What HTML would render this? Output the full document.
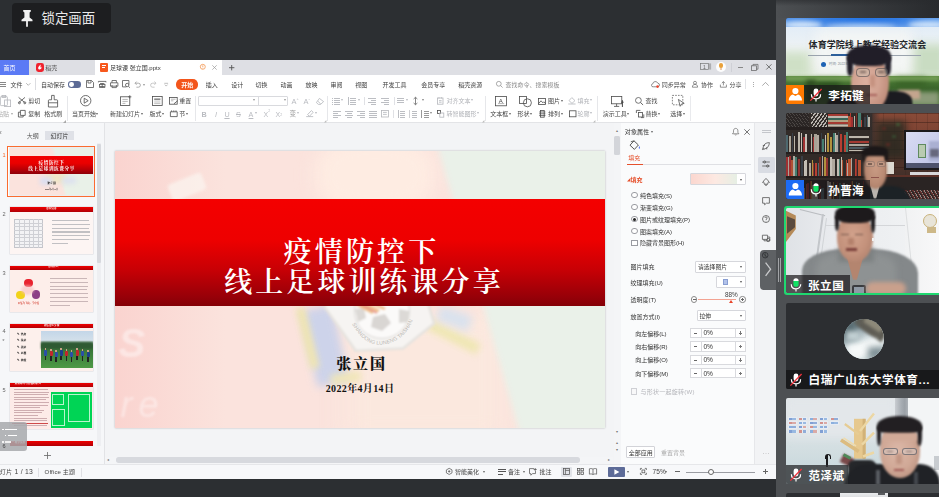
<!DOCTYPE html>
<html lang="zh-CN">
<head>
<meta charset="utf-8">
<title>会议</title>
<style>
*{box-sizing:border-box;margin:0;padding:0}
html,body{width:939px;height:497px;overflow:hidden;background:#2c2f32}
body{position:relative;font-family:"Liberation Sans","Noto Sans CJK SC",sans-serif;color:#444;font-size:6px;line-height:1}
.a{position:absolute}
.t{position:absolute;white-space:nowrap;line-height:1}
svg{position:absolute;overflow:visible}
#lock{left:12px;top:3px;width:99px;height:30px;background:#1d1e20;border-radius:4px}
#lock .t{left:29.6px;top:9.2px;font-size:13.4px;color:#e9e9e9}
#win{left:0;top:59.6px;width:776px;height:419.1px;background:#f3f4f6;overflow:hidden}
#tabbar{left:0;top:0;width:776px;height:15.2px;background:#dedfe4}
#tabbar,#menurow,#ribbon,#leftp,#props,#strip,#status{filter:blur(.3px)}
#menurow{left:0;top:15.2px;width:776px;height:18.2px;background:#fff}
#ribbon{left:0;top:33.4px;width:776px;height:30.4px;background:#fff;border-bottom:1px solid #e3e4e7}
#leftp{left:0;top:63.8px;width:104.5px;height:340.2px;background:#f6f7f9;border-right:1px solid #e2e3e6;overflow:hidden}
#edit{left:105px;top:63.8px;width:516px;height:340.2px;background:#f3f4f6}
#props{left:621px;top:63.8px;width:133px;height:340.2px;background:#fafbfc}
#strip{left:754px;top:63.8px;width:22px;height:340.2px;background:#f2f3f5;border-left:1px solid #e6e7ea}
#status{left:0;top:404px;width:776px;height:15.1px;background:#f7f8fa;border-top:1px solid #e6e7ea}
#slide{left:9.5px;top:27.9px;width:490.6px;height:276.6px;background:#fbe3dd;overflow:hidden;box-shadow:0 0 2px rgba(0,0,0,.25)}
#slide .bg1{left:300px;top:-20px;width:300px;height:340px;background:#e9f1e8;transform:skewX(15deg);transform-origin:0 0;filter:blur(3px)}
#slide .band{left:0;top:47.9px;width:491px;height:106.6px;background:linear-gradient(#f40000 0%,#ee0000 38%,#c80005 66%,#960008 92%,#840006 100%)}
.ttl{position:absolute;left:0;width:491px;text-align:center;color:#fff;font-family:"Liberation Serif","Noto Serif CJK SC",serif;font-weight:600;white-space:nowrap;line-height:1}
#rp{left:776px;top:0;width:163px;height:497px;background:#4d5053}
.tile{position:absolute;left:10px;width:153px;height:86.6px;overflow:hidden;border-radius:2px 0 0 2px;background:#2d2f32}
.nm{position:absolute;bottom:0;height:19px;background:rgba(25,25,28,.72);color:#fff;font-weight:bold;font-size:11.3px;line-height:19px;white-space:nowrap;letter-spacing:.3px}
.ic{stroke:#555;fill:none;stroke-width:.8}
</style>
</head>
<body>
<div id="lock" class="a">
  <svg width="12" height="17" viewBox="0 0 12 17" style="left:9.2px;top:6.5px"><path d="M2.2 0h7.6v1.6L8.6 2.4v5l2.9 2.4v1.5H6.9v5.2L6 17l-.9-.5v-5.2H.5V9.8l2.9-2.4v-5L2.2 1.6z" fill="#f2f2f2"/></svg>
  <span class="t">锁定画面</span>
</div>
<div id="win" class="a">
<div id="tabbar" class="a">
<div class="a" style="left:0px;top:0px;width:28.8px;height:15.2px;background:#5b7af5;"></div>
<span class="t" style="left:3.6px;top:5.12px;font-size:6px;color:#fff;">首页</span>
<div class="a" style="left:35.5px;top:3.6px;width:8.4px;height:8.4px;background:#f0222d;border-radius:2.4px"></div>
<svg width="6" height="6" viewBox="0 0 6 6" style="left:36.8px;top:4.6px;"><path d="M3.6 .6C2.2 2 1 3 1.2 4.4c.2 1 1.6 1.3 2.6.6 1-.8.8-2 .2-2.6-.2.8-.8 1-1 1 .6-.8.8-1.800.6-2.800z" fill="#fff"/></svg>
<span class="t" style="left:45.2px;top:5.12px;font-size:6px;color:#555;">稻壳</span>
<div class="a" style="left:94.5px;top:0px;width:127.5px;height:15.2px;background:#fff;"></div>
<div class="a" style="left:99.8px;top:3.2px;width:8px;height:8.8px;background:#f7581d;border-radius:1px"></div>
<div class="a" style="left:101.6px;top:5.3px;width:4.6px;height:1px;background:#fff;"></div>
<div class="a" style="left:101.6px;top:7.5px;width:3.6px;height:1px;background:#fff;"></div>
<span class="t" style="left:110px;top:5.12px;font-size:6px;color:#333;">足球课 张立国.pptx</span>
<svg width="5.6" height="5.6" viewBox="0 0 5.6 5.6" style="left:200.3px;top:4.7px;"><circle cx="2.800" cy="2.800" r="2.500" fill="none" stroke="#f08a3c" stroke-width=".7"/><path d="M2.800 1.300v1.900M2.800 3.900v.6" stroke="#f08a3c" stroke-width=".7"/></svg>
<svg width="5" height="5" viewBox="0 0 5 5" style="left:211.8px;top:5px;"><path d="M.3.300l4.400 4.400M4.700.300L.3 4.700" stroke="#999" stroke-width=".7"/></svg>
<svg width="5.4" height="5.4" viewBox="0 0 5.4 5.4" style="left:228.6px;top:5px;"><path d="M2.700 0v5.400M0 2.700h5.400" stroke="#555" stroke-width=".9"/></svg>
<svg width="11" height="7" viewBox="0 0 11 7" style="left:700px;top:3.6px;"><rect x=".4" y=".4" width="8" height="6" fill="none" stroke="#777" stroke-width=".7"/><path d="M9.600.400v6.200M10.600.400v6.200" stroke="#888" stroke-width=".6"/></svg>
<span class="t" style="left:703px;top:5.05px;font-size:5px;color:#666;">1</span>
<div class="a" style="left:715.6px;top:2.2px;width:10.4px;height:10.4px;background:#fdfdfd;border-radius:50%"></div>
<div class="a" style="left:718.6px;top:3.8px;width:4.4px;height:4.6px;background:#e9a13a;border-radius:50% 50% 45% 45%"></div>
<div class="a" style="left:719.8px;top:8px;width:2px;height:2.6px;background:#e8b98c;border-radius:1px"></div>
<div class="a" style="left:731.4px;top:3px;width:0.6px;height:9px;background:#cfd0d6;"></div>
<div class="a" style="left:737.6px;top:7.3px;width:5.4px;height:0.8px;background:#888;"></div>
<svg width="7.4" height="7" viewBox="0 0 7.4 7" style="left:750.6px;top:4px;"><rect x=".4" y="1.800" width="5" height="4.800" fill="none" stroke="#666" stroke-width=".75"/><path d="M2 1.800V.4h5v4.800H5.400" fill="none" stroke="#666" stroke-width=".75"/></svg>
<svg width="5.8" height="5.8" viewBox="0 0 5.8 5.8" style="left:766.2px;top:4.6px;"><path d="M.3.300l5.200 5.200M5.500.300L.3 5.500" stroke="#555" stroke-width=".8"/></svg>
</div>
<div id="menurow" class="a">
<div class="a" style="left:0px;top:7.299999999999999px;width:6.4px;height:0.7px;background:#888;"></div>
<div class="a" style="left:0px;top:9.399999999999999px;width:6.4px;height:0.7px;background:#888;"></div>
<div class="a" style="left:0px;top:11.5px;width:6.4px;height:0.7px;background:#888;"></div>
<span class="t" style="left:10.4px;top:7.12px;font-size:6px;color:#444;">文件</span>
<svg width="4.6" height="2.6" viewBox="0 0 4.6 2.6" style="left:26px;top:8.399999999999999px;"><path d="M.2.200l2.100 2.100L4.400.2" fill="none" stroke="#888" stroke-width=".6"/></svg>
<div class="a" style="left:35.4px;top:3.4px;width:0.6px;height:11.4px;background:#dcdde1;"></div>
<span class="t" style="left:41px;top:7.12px;font-size:6px;color:#444;">自动保存</span>
<div class="a" style="left:68.4px;top:6.3999999999999995px;width:12.8px;height:6.6px;background:#5c6b96;border-radius:3.300px"></div>
<div class="a" style="left:69.3px;top:7.299999999999999px;width:4.8px;height:4.8px;background:#fff;border-radius:50%"></div>
<svg width="8" height="8" viewBox="0 0 8 8" style="left:86px;top:5.699999999999999px;"><path d="M.5.500h5l2 2v5h-7z" stroke="#555" fill="none" stroke-width=".8"/><path d="M2 .5v2.500h3V.5" stroke="#555" fill="none" stroke-width=".8"/></svg>
<svg width="8.4" height="8" viewBox="0 0 8.4 8" style="left:98px;top:5.699999999999999px;"><path d="M.4 1.400h7.600M.4 1.400v1M8 1.400v1M2 3.500h4.400M4.200 3.500v4M1.200 7.500h6" stroke="#555" fill="none" stroke-width=".8"/><rect x="1.400" y="4.600" width="5.600" height="2" stroke="#555" fill="none" stroke-width=".8"/></svg>
<svg width="8.4" height="8" viewBox="0 0 8.4 8" style="left:110px;top:5.699999999999999px;"><path d="M2 2.800V.5h4.400v2.300M.5 2.800h7.400v3.400H.5zM2 5v2.600h4.400V5" stroke="#555" fill="none" stroke-width=".8"/></svg>
<svg width="8.4" height="8" viewBox="0 0 8.4 8" style="left:122px;top:5.699999999999999px;"><path d="M.5.500h6.400v4M.5.500v6.400h4" stroke="#555" fill="none" stroke-width=".8"/><circle cx="5.200" cy="5" r="1.700" stroke="#555" fill="none" stroke-width=".8"/><path d="M6.400 6.300l1.600 1.500" stroke="#555" fill="none" stroke-width=".8"/></svg>
<svg width="7" height="6" viewBox="0 0 7 6" style="left:134.4px;top:6.699999999999999px;"><path d="M1.200 2.200h3.200a2 2 0 010 4H2.400" fill="none" stroke="#999" stroke-width=".8"/><path d="M2.600.6L1 2.200l1.600 1.600" fill="none" stroke="#999" stroke-width=".8"/></svg>
<span class="t" style="left:143px;top:7.98px;font-size:4px;color:#999;">▾</span>
<svg width="7" height="6" viewBox="0 0 7 6" style="left:150px;top:6.699999999999999px;"><path d="M5.800 2.200H2.600a2 2 0 000 4H4.600" fill="none" stroke="#bbb" stroke-width=".8"/><path d="M4.400.6L6 2.200 4.400 3.800" fill="none" stroke="#bbb" stroke-width=".8"/></svg>
<svg width="4.4" height="3.4" viewBox="0 0 4.4 3.4" style="left:163.6px;top:8.1px;"><path d="M.3.300h3.800M.8 1.600l1.400 1.500 1.400-1.500" fill="none" stroke="#888" stroke-width=".55"/></svg>
<div class="a" style="left:176.4px;top:4.6px;width:21.8px;height:10.2px;background:#f3551b;border-radius:5.100px"></div>
<span class="t" style="left:176.4px;top:7.12px;font-size:6px;color:#fff;width:21.8px;text-align:center;font-weight:bold">开始</span>
<span class="t" style="left:205.8px;top:7.12px;font-size:6px;color:#3c3c3c;">插入</span>
<span class="t" style="left:231.3px;top:7.12px;font-size:6px;color:#3c3c3c;">设计</span>
<span class="t" style="left:255.6px;top:7.12px;font-size:6px;color:#3c3c3c;">切换</span>
<span class="t" style="left:280.4px;top:7.12px;font-size:6px;color:#3c3c3c;">动画</span>
<span class="t" style="left:305.4px;top:7.12px;font-size:6px;color:#3c3c3c;">放映</span>
<span class="t" style="left:330.5px;top:7.12px;font-size:6px;color:#3c3c3c;">审阅</span>
<span class="t" style="left:355.3px;top:7.12px;font-size:6px;color:#3c3c3c;">视图</span>
<span class="t" style="left:382.6px;top:7.12px;font-size:6px;color:#3c3c3c;">开发工具</span>
<span class="t" style="left:421.2px;top:7.12px;font-size:6px;color:#3c3c3c;">会员专享</span>
<span class="t" style="left:458.3px;top:7.12px;font-size:6px;color:#3c3c3c;">稻壳资源</span>
<svg width="7" height="7" viewBox="0 0 7 7" style="left:495.8px;top:6.299999999999999px;"><circle cx="2.800" cy="2.800" r="2.400" fill="none" stroke="#888" stroke-width=".7"/><path d="M4.600 4.600l2 2" stroke="#888" stroke-width=".7"/></svg>
<span class="t" style="left:505.5px;top:7.12px;font-size:6px;color:#8a8a8a;">查找命令、搜索模板</span>
<svg width="8.6" height="6.4" viewBox="0 0 8.6 6.4" style="left:650.6px;top:6.499999999999999px;"><path d="M2.200 5.800h4.400a1.800 1.800 0 00.2-3.600A2.600 2.600 0 001.800 2.800 1.500 1.500 0 002.200 5.800z" fill="none" stroke="#666" stroke-width=".75"/><circle cx="6.600" cy="5.600" r="1.300" fill="#f0452d"/></svg>
<span class="t" style="left:661.7px;top:7.12px;font-size:6px;color:#444;">同步异常</span>
<svg width="6.4" height="6.4" viewBox="0 0 6.4 6.4" style="left:692px;top:6.499999999999999px;"><circle cx="3" cy="1.800" r="1.500" fill="none" stroke="#666" stroke-width=".7"/><path d="M.4 6.200c0-2 1-2.800 2.600-2.800s2.600.8 2.600 2.800z" fill="none" stroke="#666" stroke-width=".7"/></svg>
<span class="t" style="left:701px;top:7.12px;font-size:6px;color:#444;">协作</span>
<svg width="6.8" height="6.6" viewBox="0 0 6.8 6.6" style="left:720.4px;top:6.299999999999999px;"><path d="M.4 3.600v2.600h6V3.600M3.400 4.400V.6M1.800 2.200L3.400.6 5 2.200" fill="none" stroke="#666" stroke-width=".7"/></svg>
<span class="t" style="left:729.5px;top:7.12px;font-size:6px;color:#444;">分享</span>
<div class="a" style="left:745.2px;top:4px;width:0.6px;height:10px;background:#e2e3e6;"></div>
<div class="a" style="left:753px;top:6.849999999999999px;width:0.9px;height:0.9px;background:#777;border-radius:50%"></div>
<div class="a" style="left:753px;top:9.25px;width:0.9px;height:0.9px;background:#777;border-radius:50%"></div>
<div class="a" style="left:753px;top:11.65px;width:0.9px;height:0.9px;background:#777;border-radius:50%"></div>
<svg width="7" height="4" viewBox="0 0 7 4" style="left:762px;top:7.699999999999999px;"><path d="M.3 3.700L3.500.4l3.200 3.300" fill="none" stroke="#888" stroke-width=".7"/></svg>
</div>
<div id="ribbon" class="a">
<svg width="11" height="12" viewBox="0 0 11 12" style="left:0px;top:2.5px;"><rect x=".4" y="1.600" width="7" height="9" rx=".8" stroke="#b4b6bb" fill="none" stroke-width=".8"/><rect x="2" y=".4" width="3.800" height="2" stroke="#b4b6bb" fill="none" stroke-width=".8" fill="#fff"/><rect x="4.600" y="5" width="6" height="6.600" stroke="#b4b6bb" fill="none" stroke-width=".8" fill="#fff"/></svg>
<span class="t" style="left:-3px;top:18.22px;font-size:6px;color:#aaa;">粘贴</span>
<span class="t" style="left:10.5px;top:19.08px;font-size:4px;color:#aaa;">▾</span>
<svg width="8.4" height="7" viewBox="0 0 8.4 7" style="left:18px;top:4.5px;"><path d="M.6.400l6 5M7 .4L1 5.400" stroke="#4a4a4a" fill="none" stroke-width=".8"/><circle cx="1.400" cy="5.800" r="1" stroke="#4a4a4a" fill="none" stroke-width=".8"/><circle cx="6.800" cy="5.800" r="1" stroke="#4a4a4a" fill="none" stroke-width=".8"/></svg>
<span class="t" style="left:28.2px;top:5.42px;font-size:6px;color:#444;">剪切</span>
<svg width="7.6" height="7.4" viewBox="0 0 7.6 7.4" style="left:18.2px;top:17.199999999999996px;"><path d="M2.400.400h4.800v5H2.400z" stroke="#4a4a4a" fill="none" stroke-width=".8"/><path d="M2.400 2.200H.4v4.800h4.800V5.400" stroke="#4a4a4a" fill="none" stroke-width=".8"/></svg>
<span class="t" style="left:28.2px;top:18.22px;font-size:6px;color:#444;">复制</span>
<svg width="10" height="12.4" viewBox="0 0 10 12.4" style="left:48px;top:2.0px;"><path d="M3.600.400h2.600v4.400h2.600c.6 0 .8.300.8.800v6.400H.4V5.600c0-.5.200-.8.800-.8h2.400z" stroke="#4a4a4a" fill="none" stroke-width=".8"/><path d="M.4 7.800h9.200" stroke="#4a4a4a" fill="none" stroke-width=".8"/></svg>
<span class="t" style="left:44.2px;top:18.22px;font-size:6px;color:#444;">格式刷</span>
<svg width="3" height="3" viewBox="0 0 3 3" style="left:63px;top:26.6px;"><path d="M3 0v3H0z" fill="#aaa"/></svg>
<div class="a" style="left:67px;top:3px;width:0.6px;height:25px;background:#e6e7ea;"></div>
<svg width="11.4" height="11.4" viewBox="0 0 11.4 11.4" style="left:80.4px;top:2.3px;"><circle cx="5.700" cy="5.700" r="5.200" stroke="#4a4a4a" fill="none" stroke-width=".8"/><path d="M4.200 3.200l4 2.500-4 2.500z" stroke="#4a4a4a" fill="none" stroke-width=".8"/></svg>
<span class="t" style="left:72px;top:18.22px;font-size:6px;color:#444;">当页开始</span>
<span class="t" style="left:96.4px;top:19.08px;font-size:4px;color:#666;">▾</span>
<svg width="11.6" height="11" viewBox="0 0 11.6 11" style="left:120px;top:2.5px;"><rect x=".4" y="1.800" width="9.400" height="8.800" stroke="#4a4a4a" fill="none" stroke-width=".8" stroke="#777"/><path d="M2.400 4.400h5.400M2.400 6.400h5.400M2.400 8.400h3" stroke="#999" stroke-width=".7"/><path d="M9.800.2v3.200M8.200 1.800h3.200" stroke="#555" stroke-width=".8"/></svg>
<span class="t" style="left:110px;top:18.22px;font-size:6px;color:#444;">新建幻灯片</span>
<span class="t" style="left:140.6px;top:19.08px;font-size:4px;color:#666;">▾</span>
<svg width="10.6" height="10" viewBox="0 0 10.6 10" style="left:152.4px;top:3.0px;"><rect x=".4" y=".4" width="9.800" height="9.200" stroke="#4a4a4a" fill="none" stroke-width=".8" stroke="#777"/><rect x="2.200" y="2.400" width="6.200" height="1.800" fill="#888"/><path d="M2.200 6h6.200M2.200 7.600h6.200" stroke="#999" stroke-width=".6"/></svg>
<span class="t" style="left:149.6px;top:18.22px;font-size:6px;color:#444;">版式</span>
<span class="t" style="left:162px;top:19.08px;font-size:4px;color:#666;">▾</span>
<svg width="8.6" height="7.6" viewBox="0 0 8.6 7.6" style="left:169px;top:4.2px;"><rect x=".4" y=".4" width="7.800" height="6.800" stroke="#4a4a4a" fill="none" stroke-width=".8" stroke="#666"/><path d="M2 2.200h4.600M2 3.800h2.400" stroke="#888" stroke-width=".6"/><path d="M5 6.800l3.600-3" stroke="#444" stroke-width=".8"/></svg>
<span class="t" style="left:179.2px;top:5.42px;font-size:6px;color:#444;">重置</span>
<svg width="7.6" height="7" viewBox="0 0 7.6 7" style="left:170px;top:17.199999999999996px;"><path d="M.4 1.800h6.800v4.800H.4zM1.600.400v1.400M3.800.400v1.400M6 .400v1.400" stroke="#4a4a4a" fill="none" stroke-width=".8" stroke="#666"/></svg>
<span class="t" style="left:179.2px;top:18.22px;font-size:6px;color:#444;">节</span>
<span class="t" style="left:185.8px;top:19.08px;font-size:4px;color:#666;">▾</span>
<div class="a" style="left:195.4px;top:3px;width:0.6px;height:25px;background:#e6e7ea;"></div>
<div class="a" style="left:198px;top:3.2px;width:90.4px;height:9.6px;background:#fff;border:.6px solid #d9dade;border-radius:1px"></div>
<div class="a" style="left:258.2px;top:3.2px;width:0.6px;height:9.6px;background:#d9dade;"></div>
<span class="t" style="left:253.4px;top:6.45px;font-size:3.6px;color:#999;">▾</span>
<span class="t" style="left:284px;top:6.45px;font-size:3.6px;color:#999;">▾</span>
<span class="t" style="left:291.6px;top:4.82px;font-size:7.4px;color:#b9bbc0;">A</span>
<span class="t" style="left:296.6px;top:4.28px;font-size:4px;color:#b9bbc0;">+</span>
<span class="t" style="left:303.4px;top:4.82px;font-size:7.4px;color:#b9bbc0;">A</span>
<span class="t" style="left:308.4px;top:4.28px;font-size:4px;color:#b9bbc0;">-</span>
<svg width="8" height="6.8" viewBox="0 0 8 6.8" style="left:315.6px;top:4.6px;"><path d="M3.400.400L7.600 3.600 4.600 6.400H2.400L.4 4.600z" stroke="#b4b6bb" fill="none" stroke-width=".8"/><path d="M1.800 3.200L4.800 6" stroke="#b4b6bb" fill="none" stroke-width=".8"/></svg>
<span class="t" style="left:201.6px;top:17.7px;font-size:7.2px;color:#b9bbc0;font-weight:bold">B</span>
<span class="t" style="left:215px;top:17.7px;font-size:7.2px;color:#b9bbc0;font-style:italic">I</span>
<span class="t" style="left:224.4px;top:17.7px;font-size:7.2px;color:#b9bbc0;text-decoration:underline">U</span>
<span class="t" style="left:236px;top:17.7px;font-size:7.2px;color:#b9bbc0;text-decoration:line-through">S</span>
<span class="t" style="left:248.6px;top:17.7px;font-size:7.2px;color:#b9bbc0;text-decoration:underline">A</span>
<span class="t" style="left:255.2px;top:19.25px;font-size:3.6px;color:#b9bbc0;">▾</span>
<span class="t" style="left:263.4px;top:17.79px;font-size:7px;color:#b9bbc0;">X</span>
<span class="t" style="left:268.2px;top:17.25px;font-size:3.6px;color:#b9bbc0;">2</span>
<span class="t" style="left:275.4px;top:17.79px;font-size:7px;color:#b9bbc0;">X</span>
<span class="t" style="left:280.2px;top:21.25px;font-size:3.6px;color:#b9bbc0;">2</span>
<span class="t" style="left:289.4px;top:17.96px;font-size:6.6px;color:#999;">变</span>
<span class="t" style="left:297.2px;top:19.25px;font-size:3.6px;color:#b9bbc0;">▾</span>
<svg width="8" height="7" viewBox="0 0 8 7" style="left:306.4px;top:17.4px;"><path d="M1.600 4.600L5.400.6l1.800 1.700-3.800 4z" stroke="#b4b6bb" fill="none" stroke-width=".8"/><path d="M.2 6.600h7" stroke="#b4b6bb" fill="none" stroke-width=".8"/></svg>
<span class="t" style="left:315.2px;top:19.25px;font-size:3.6px;color:#b9bbc0;">▾</span>
<svg width="2.4" height="2.4" viewBox="0 0 2.4 2.4" style="left:323.6px;top:27.4px;"><path d="M2.400 0v2.400H0z" fill="#bbb"/></svg>
<div class="a" style="left:326.6px;top:3px;width:0.6px;height:25px;background:#e6e7ea;"></div>
<div class="a" style="left:333.6px;top:4.8px;width:6px;height:0.7px;background:#bcbec3;"></div><div class="a" style="left:333.6px;top:6.9px;width:6px;height:0.7px;background:#bcbec3;"></div><div class="a" style="left:333.6px;top:9.0px;width:6px;height:0.7px;background:#bcbec3;"></div><div class="a" style="left:333.6px;top:11.1px;width:6px;height:0.7px;background:#bcbec3;"></div>
<div class="a" style="left:331.6px;top:4.6px;width:1px;height:1px;background:#bcbec3;"></div><div class="a" style="left:331.6px;top:6.7px;width:1px;height:1px;background:#bcbec3;"></div><div class="a" style="left:331.6px;top:8.8px;width:1px;height:1px;background:#bcbec3;"></div><div class="a" style="left:331.6px;top:10.9px;width:1px;height:1px;background:#bcbec3;"></div>
<span class="t" style="left:341.4px;top:6.45px;font-size:3.6px;color:#b9bbc0;">▾</span>
<div class="a" style="left:350.4px;top:4.8px;width:6px;height:0.7px;background:#bcbec3;"></div><div class="a" style="left:350.4px;top:6.9px;width:6px;height:0.7px;background:#bcbec3;"></div><div class="a" style="left:350.4px;top:9.0px;width:6px;height:0.7px;background:#bcbec3;"></div><div class="a" style="left:350.4px;top:11.1px;width:6px;height:0.7px;background:#bcbec3;"></div>
<div class="a" style="left:348.2px;top:4.4px;width:0.8px;height:7.6px;background:#bcbec3;"></div>
<span class="t" style="left:358.2px;top:6.45px;font-size:3.6px;color:#b9bbc0;">▾</span>
<div class="a" style="left:364px;top:4.0px;width:0.6px;height:8px;background:#e0e1e5;"></div>
<div class="a" style="left:368.4px;top:4.8px;width:7.6px;height:0.7px;background:#bcbec3;"></div><div class="a" style="left:371.4px;top:6.9px;width:4.6px;height:0.7px;background:#bcbec3;"></div><div class="a" style="left:368.4px;top:9.0px;width:7.6px;height:0.7px;background:#bcbec3;"></div><div class="a" style="left:371.4px;top:11.1px;width:4.6px;height:0.7px;background:#bcbec3;"></div>
<div class="a" style="left:381px;top:4.8px;width:7.6px;height:0.7px;background:#bcbec3;"></div><div class="a" style="left:384px;top:6.9px;width:4.6px;height:0.7px;background:#bcbec3;"></div><div class="a" style="left:381px;top:9.0px;width:7.6px;height:0.7px;background:#bcbec3;"></div><div class="a" style="left:384px;top:11.1px;width:4.6px;height:0.7px;background:#bcbec3;"></div>
<div class="a" style="left:394.4px;top:4.0px;width:0.6px;height:8px;background:#e0e1e5;"></div>
<div class="a" style="left:397.4px;top:4.8px;width:7px;height:0.7px;background:#bcbec3;"></div><div class="a" style="left:397.4px;top:6.9px;width:7px;height:0.7px;background:#bcbec3;"></div><div class="a" style="left:397.4px;top:9.0px;width:7px;height:0.7px;background:#bcbec3;"></div>
<span class="t" style="left:405.6px;top:6.45px;font-size:3.6px;color:#b9bbc0;">▾</span>
<svg width="5" height="8" viewBox="0 0 5 8" style="left:413.4px;top:4.0px;"><path d="M2.500.300v7.400M.6 2L2.500.3l1.900 1.700M.6 6l1.900 1.700L4.400 6" fill="none" stroke="#666" stroke-width=".8"/></svg>
<span class="t" style="left:421.6px;top:6.45px;font-size:3.6px;color:#888;">▾</span>
<div class="a" style="left:333.4px;top:17.6px;width:7.6px;height:0.7px;background:#bcbec3;"></div><div class="a" style="left:333.4px;top:19.7px;width:5px;height:0.7px;background:#bcbec3;"></div><div class="a" style="left:333.4px;top:21.8px;width:7.6px;height:0.7px;background:#bcbec3;"></div><div class="a" style="left:333.4px;top:23.9px;width:5px;height:0.7px;background:#bcbec3;"></div>
<div class="a" style="left:345.4px;top:17.6px;width:7.6px;height:0.7px;background:#bcbec3;"></div><div class="a" style="left:346.7px;top:19.7px;width:5px;height:0.7px;background:#bcbec3;"></div><div class="a" style="left:345.4px;top:21.8px;width:7.6px;height:0.7px;background:#bcbec3;"></div><div class="a" style="left:346.7px;top:23.9px;width:5px;height:0.7px;background:#bcbec3;"></div>
<div class="a" style="left:357.4px;top:17.6px;width:7.6px;height:0.7px;background:#bcbec3;"></div><div class="a" style="left:360.0px;top:19.7px;width:5px;height:0.7px;background:#bcbec3;"></div><div class="a" style="left:357.4px;top:21.8px;width:7.6px;height:0.7px;background:#bcbec3;"></div><div class="a" style="left:360.0px;top:23.9px;width:5px;height:0.7px;background:#bcbec3;"></div>
<div class="a" style="left:369.4px;top:17.6px;width:7.6px;height:0.7px;background:#bcbec3;"></div><div class="a" style="left:369.4px;top:19.7px;width:7.6px;height:0.7px;background:#bcbec3;"></div><div class="a" style="left:369.4px;top:21.8px;width:7.6px;height:0.7px;background:#bcbec3;"></div><div class="a" style="left:369.4px;top:23.9px;width:7.6px;height:0.7px;background:#bcbec3;"></div>
<svg width="7.8" height="7.4" viewBox="0 0 7.8 7.4" style="left:381.2px;top:17.199999999999996px;"><rect x=".4" y=".4" width="7" height="6.600" stroke="#b4b6bb" fill="none" stroke-width=".8"/><path d="M2 2.400h3.800M2 4.400h3.800" stroke="#b4b6bb" fill="none" stroke-width=".8"/></svg>
<div class="a" style="left:393.4px;top:16.799999999999997px;width:0.6px;height:8px;background:#e0e1e5;"></div>
<div class="a" style="left:400px;top:17.6px;width:5px;height:0.7px;background:#bcbec3;"></div><div class="a" style="left:400px;top:19.7px;width:5px;height:0.7px;background:#bcbec3;"></div><div class="a" style="left:400px;top:21.8px;width:5px;height:0.7px;background:#bcbec3;"></div><div class="a" style="left:400px;top:23.9px;width:5px;height:0.7px;background:#bcbec3;"></div><div class="a" style="left:397.6px;top:17.199999999999996px;width:0.8px;height:7.4px;background:#bcbec3;"></div>
<div class="a" style="left:411.8px;top:17.6px;width:5px;height:0.7px;background:#bcbec3;"></div><div class="a" style="left:411.8px;top:19.7px;width:5px;height:0.7px;background:#bcbec3;"></div><div class="a" style="left:411.8px;top:21.8px;width:5px;height:0.7px;background:#bcbec3;"></div><div class="a" style="left:411.8px;top:23.9px;width:5px;height:0.7px;background:#bcbec3;"></div><div class="a" style="left:409.4px;top:17.199999999999996px;width:0.8px;height:7.4px;background:#cfd0d4;"></div>
<div class="a" style="left:423.6px;top:17.6px;width:5px;height:0.7px;background:#999;"></div><div class="a" style="left:423.6px;top:19.7px;width:5px;height:0.7px;background:#999;"></div><div class="a" style="left:423.6px;top:21.8px;width:5px;height:0.7px;background:#999;"></div><div class="a" style="left:423.6px;top:23.9px;width:5px;height:0.7px;background:#999;"></div><div class="a" style="left:421.2px;top:17.199999999999996px;width:0.8px;height:7.4px;background:#999;"></div>
<span class="t" style="left:430.2px;top:19.25px;font-size:3.6px;color:#888;">▾</span>
<svg width="6.8" height="7.6" viewBox="0 0 6.8 7.6" style="left:437px;top:4.2px;"><rect x=".4" y="1" width="5.600" height="6.200" stroke="#b4b6bb" fill="none" stroke-width=".8"/><path d="M2 .2v1.400M4.400.200v1.400M2 3.600h2.600M2 5.200h2.600" stroke="#b4b6bb" fill="none" stroke-width=".8"/></svg>
<span class="t" style="left:446.6px;top:5.42px;font-size:6px;color:#b0b2b7;">对齐文本</span>
<span class="t" style="left:471.4px;top:6.45px;font-size:3.6px;color:#b9bbc0;">▾</span>
<svg width="7.2" height="7.6" viewBox="0 0 7.2 7.6" style="left:437px;top:16.999999999999996px;"><rect x=".4" y=".4" width="3.200" height="3.200" stroke="#4a4a4a" fill="none" stroke-width=".8" stroke="#888"/><rect x="2.800" y="3" width="4" height="4.200" stroke="#b4b6bb" fill="none" stroke-width=".8" fill="#fff"/></svg>
<span class="t" style="left:446.6px;top:18.22px;font-size:6px;color:#b0b2b7;">转智能图形</span>
<span class="t" style="left:477.4px;top:19.25px;font-size:3.6px;color:#b9bbc0;">▾</span>
<svg width="2.4" height="2.4" viewBox="0 0 2.4 2.4" style="left:481.6px;top:27.4px;"><path d="M2.400 0v2.400H0z" fill="#bbb"/></svg>
<div class="a" style="left:485.4px;top:3px;width:0.6px;height:25px;background:#e6e7ea;"></div>
<svg width="12.2" height="10.4" viewBox="0 0 12.2 10.4" style="left:495.2px;top:3.0px;"><rect x=".6" y=".6" width="11" height="9.200" stroke="#4a4a4a" fill="none" stroke-width=".8" stroke="#555"/><path d="M3 7.600h6.200" stroke="#999" stroke-width=".7"/></svg><span class="t" style="left:498.8px;top:4.62px;font-size:6px;color:#444;">A</span>
<span class="t" style="left:490.2px;top:18.22px;font-size:6px;color:#444;">文本框</span>
<span class="t" style="left:508.6px;top:19.08px;font-size:4px;color:#666;">▾</span>
<svg width="13" height="11.4" viewBox="0 0 13 11.4" style="left:519.2px;top:2.8px;"><rect x=".4" y=".4" width="7.200" height="7" stroke="#4a4a4a" fill="none" stroke-width=".8" stroke="#666"/><circle cx="8.400" cy="6.800" r="4" stroke="#4a4a4a" fill="none" stroke-width=".8" fill="#fff" stroke="#555"/></svg>
<span class="t" style="left:517.6px;top:18.22px;font-size:6px;color:#444;">形状</span>
<span class="t" style="left:529.8px;top:19.08px;font-size:4px;color:#666;">▾</span>
<svg width="8" height="6.8" viewBox="0 0 8 6.8" style="left:538px;top:4.6px;"><rect x=".4" y=".4" width="7.200" height="6" stroke="#4a4a4a" fill="none" stroke-width=".8"/><path d="M.6 5.600l2.400-2.800 1.800 2 1-1 1.600 1.800" stroke="#4a4a4a" fill="none" stroke-width=".8" stroke-width=".6"/></svg>
<span class="t" style="left:548px;top:5.42px;font-size:6px;color:#444;">图片</span>
<span class="t" style="left:560.6px;top:6.28px;font-size:4px;color:#666;">▾</span>
<svg width="6.6" height="7.6" viewBox="0 0 6.6 7.6" style="left:538.6px;top:16.999999999999996px;"><rect x="1.400" y=".4" width="3.800" height="6.800" stroke="#4a4a4a" fill="none" stroke-width=".8"/><path d="M.2 2h6.200M.2 3.800h6.200M.2 5.600h6.200" stroke="#4a4a4a" fill="none" stroke-width=".8" stroke-width=".6"/></svg>
<span class="t" style="left:548px;top:18.22px;font-size:6px;color:#444;">排列</span>
<span class="t" style="left:560.6px;top:19.08px;font-size:4px;color:#666;">▾</span>
<svg width="8" height="7.2" viewBox="0 0 8 7.2" style="left:568.4px;top:4.4px;"><path d="M3.800.600L7 3.600 4 6.400 1 3.600z" stroke="#b4b6bb" fill="none" stroke-width=".8"/><path d="M.2 7h7.400" stroke="#b4b6bb" fill="none" stroke-width=".8"/></svg>
<span class="t" style="left:577.4px;top:5.42px;font-size:6px;color:#b0b2b7;">填充</span>
<span class="t" style="left:590.4px;top:6.45px;font-size:3.6px;color:#b9bbc0;">▾</span>
<svg width="7.6" height="7.2" viewBox="0 0 7.6 7.2" style="left:568.6px;top:16.999999999999996px;"><rect x=".4" y=".8" width="6.600" height="6" stroke="#4a4a4a" fill="none" stroke-width=".8" stroke="#888"/></svg>
<span class="t" style="left:577.4px;top:18.22px;font-size:6px;color:#b0b2b7;">轮廓</span>
<span class="t" style="left:590.4px;top:19.25px;font-size:3.6px;color:#b9bbc0;">▾</span>
<svg width="2.4" height="2.4" viewBox="0 0 2.4 2.4" style="left:593px;top:27.4px;"><path d="M2.400 0v2.400H0z" fill="#bbb"/></svg>
<div class="a" style="left:596.8px;top:3px;width:0.6px;height:25px;background:#e6e7ea;"></div>
<svg width="13" height="11.6" viewBox="0 0 13 11.6" style="left:610.6px;top:2.5999999999999996px;"><rect x=".4" y=".4" width="10.400" height="7.400" stroke="#4a4a4a" fill="none" stroke-width=".8" stroke="#666"/><path d="M5.600 7.800v2.400M3 10.400h5.200" stroke="#4a4a4a" fill="none" stroke-width=".8" stroke="#666"/><path d="M11.400 4.200v6.800M10.200 6.200h2.400" stroke="#444" stroke-width="1"/></svg>
<span class="t" style="left:602.8px;top:18.22px;font-size:6px;color:#444;">演示工具</span>
<span class="t" style="left:627.4px;top:19.08px;font-size:4px;color:#666;">▾</span>
<svg width="8.4" height="8.2" viewBox="0 0 8.4 8.2" style="left:635px;top:4.0px;"><circle cx="3.400" cy="3.400" r="2.900" fill="none" stroke="#555" stroke-width=".8"/><path d="M5.600 5.600l2.500 2.400" stroke="#555" stroke-width=".9"/></svg>
<span class="t" style="left:645.4px;top:5.42px;font-size:6px;color:#444;">查找</span>
<svg width="8.2" height="8" viewBox="0 0 8.2 8" style="left:635.6px;top:16.799999999999997px;"><path d="M.4 3V.4h4" stroke="#4a4a4a" fill="none" stroke-width=".8" stroke-width=".7"/><rect x="2.400" y="2.400" width="4" height="4.600" stroke="#4a4a4a" fill="none" stroke-width=".8" stroke-width=".7"/><path d="M7.800 4.400V7.600H5" stroke="#4a4a4a" fill="none" stroke-width=".8" stroke-width=".7"/></svg>
<span class="t" style="left:645.4px;top:18.22px;font-size:6px;color:#444;">替换</span>
<span class="t" style="left:658.2px;top:19.08px;font-size:4px;color:#666;">▾</span>
<svg width="13" height="12" viewBox="0 0 13 12" style="left:672px;top:2.2px;"><rect x=".4" y=".4" width="10.400" height="9.400" fill="none" stroke="#666" stroke-width=".8" stroke-dasharray="1.600 1.200"/><path d="M6.400 4.400l5.800 4-2.600.5-1.400 2.400z" fill="#fff" stroke="#555" stroke-width=".8"/></svg>
<span class="t" style="left:670.2px;top:18.22px;font-size:6px;color:#444;">选择</span>
<span class="t" style="left:682.6px;top:19.08px;font-size:4px;color:#666;">▾</span>
<div class="a" style="left:690.2px;top:3px;width:0.6px;height:25px;background:#e9eaed;"></div>
</div>
<div id="leftp" class="a">
<span class="t" style="left:-0.5px;top:5.99px;font-size:7px;color:#777;">‹</span>
<span class="t" style="left:26.8px;top:9.52px;font-size:6px;color:#555;">大纲</span>
<div class="a" style="left:44.7px;top:7.2px;width:29.4px;height:9.6px;background:#dfe1e7;"></div>
<span class="t" style="left:50.6px;top:9.52px;font-size:6px;color:#333;">幻灯片</span>
<div class="a" style="left:97.2px;top:19.6px;width:4.2px;height:322px;background:#eeeff2;"></div>
<div class="a" style="left:97.4px;top:20.6px;width:3.8px;height:119px;background:#d7d9de;border-radius:1px"></div>
<span class="t" style="left:2.4px;top:29.69px;font-size:5.6px;color:#f2682a;">1</span>
<span class="t" style="left:2.4px;top:88.99px;font-size:5.6px;color:#666;">2</span>
<span class="t" style="left:2.4px;top:147.29px;font-size:5.6px;color:#666;">3</span>
<span class="t" style="left:2.4px;top:205.79px;font-size:5.6px;color:#666;">4</span>
<span class="t" style="left:2.4px;top:264.29px;font-size:5.6px;color:#666;">5</span>
<span class="t" style="left:2.4px;top:322.89px;font-size:5.6px;color:#666;">6</span>
<span class="t" style="left:2.2px;top:214.12px;font-size:6px;color:#777;">*</span>
<div class="a" style="left:7.4px;top:22.2px;width:88px;height:51.6px;border:1.400px solid #fa6c30;background:#fff"></div>
<div class="a" style="left:10px;top:24.6px;width:83px;height:46.8px;background:#fbe3dd;overflow:hidden;box-shadow:0 0 0 .5px #d9dade"><div class="a" style="left:50px;top:-3px;width:60px;height:60px;background:#e9f1e8;transform:skewX(15deg);filter:blur(1px)"></div><div class="a" style="left:36px;top:25px;width:20px;height:10px;background:#efe6c6;filter:blur(2px)"></div><div class="a" style="left:30px;top:29px;width:12px;height:8px;background:#dcdff0;filter:blur(2px)"></div><div class="a" style="left:52px;top:29px;width:14px;height:7px;background:#dde2ee;filter:blur(2px)"></div><div class="a" style="left:0px;top:8.1px;width:83px;height:18.1px;background:linear-gradient(#f20000 0%,#ea0000 40%,#b80006 75%,#8c0008 100%);"></div><div class="ttl" style="width:83px;top:13.400px;font-size:4.6px;letter-spacing:.6px;font-weight:700">疫情防控下</div><div class="ttl" style="width:83px;top:18.800px;font-size:4.6px;letter-spacing:.6px;font-weight:700">线上足球训练课分享</div><div class="ttl" style="width:83px;top:35px;font-size:2.800px;color:#111;font-weight:900">张立国</div><div class="ttl" style="width:83px;top:39.800px;font-size:2px;color:#111;font-weight:700">2022年4月14日</div></div>
<div class="a" style="left:10px;top:83.9px;width:83px;height:46.8px;background:#fdf5f3;overflow:hidden;box-shadow:0 0 0 .5px #d9dade"><div class="a" style="left:0px;top:0px;width:83px;height:4.4px;background:linear-gradient(#f00000,#b00006);"></div><div class="ttl" style="width:83px;top:.9px;font-size:2.600px;font-weight:700">课程安排</div><div class="a" style="left:4px;top:12px;width:29px;height:29px;background:#f3f3f5;border:.4px solid #c4c5cb"></div><div class="a" style="left:8.85px;top:12px;width:0.3px;height:29px;background:#cfd0d5;"></div><div class="a" style="left:13.7px;top:12px;width:0.3px;height:29px;background:#cfd0d5;"></div><div class="a" style="left:18.549999999999997px;top:12px;width:0.3px;height:29px;background:#cfd0d5;"></div><div class="a" style="left:23.4px;top:12px;width:0.3px;height:29px;background:#cfd0d5;"></div><div class="a" style="left:28.25px;top:12px;width:0.3px;height:29px;background:#cfd0d5;"></div><div class="a" style="left:4px;top:15.6px;width:29px;height:0.3px;background:#cfd0d5;"></div><div class="a" style="left:4px;top:19.2px;width:29px;height:0.3px;background:#cfd0d5;"></div><div class="a" style="left:4px;top:22.8px;width:29px;height:0.3px;background:#cfd0d5;"></div><div class="a" style="left:4px;top:26.4px;width:29px;height:0.3px;background:#cfd0d5;"></div><div class="a" style="left:4px;top:30.0px;width:29px;height:0.3px;background:#cfd0d5;"></div><div class="a" style="left:4px;top:33.6px;width:29px;height:0.3px;background:#cfd0d5;"></div><div class="a" style="left:4px;top:37.2px;width:29px;height:0.3px;background:#cfd0d5;"></div><div class="a" style="left:42px;top:12.5px;width:37px;height:1.1px;background:#9a9ca3;opacity:.6"></div><div class="a" style="left:42px;top:16.4px;width:38px;height:1.1px;background:#9a9ca3;opacity:.6"></div><div class="a" style="left:42px;top:20.3px;width:37px;height:1.1px;background:#9a9ca3;opacity:.6"></div><div class="a" style="left:42px;top:24.2px;width:38px;height:1.1px;background:#9a9ca3;opacity:.6"></div><div class="a" style="left:42px;top:28.1px;width:38px;height:1.1px;background:#9a9ca3;opacity:.6"></div><div class="a" style="left:42px;top:32.0px;width:37px;height:1.1px;background:#9a9ca3;opacity:.6"></div><div class="a" style="left:42px;top:35.9px;width:16px;height:1.1px;background:#9a9ca3;opacity:.6"></div></div>
<div class="a" style="left:10px;top:142.2px;width:83px;height:46.8px;background:#fdeeea;overflow:hidden;box-shadow:0 0 0 .5px #d9dade"><div class="a" style="left:0px;top:0px;width:83px;height:4.4px;background:linear-gradient(#f00000,#b00006);"></div><div class="ttl" style="width:83px;top:.9px;font-size:2.600px;font-weight:700">一 课程模式</div><div class="a" style="left:14.4px;top:13px;width:8.8px;height:8.8px;background:#e8222e;border-radius:50%"></div><div class="a" style="left:6px;top:25.2px;width:8.6px;height:8.6px;background:#f2d21a;border-radius:50%"></div><div class="a" style="left:21.5px;top:24.8px;width:8.8px;height:8.8px;background:#8c3f86;border-radius:50%"></div><div class="a" style="left:11px;top:19px;width:13px;height:10px;background:#f7c0c0;border-radius:50%;opacity:.6;filter:blur(1px)"></div><div class="ttl" style="width:37px;top:37.600px;font-size:2.400px;color:#d03020;font-weight:700">以练为主线、学中练</div><div class="a" style="left:40px;top:12.4px;width:37px;height:1.1px;background:#a08a8e;opacity:.55"></div><div class="a" style="left:40px;top:16.2px;width:38px;height:1.1px;background:#a08a8e;opacity:.55"></div><div class="a" style="left:40px;top:20.0px;width:38px;height:1.1px;background:#a08a8e;opacity:.55"></div><div class="a" style="left:40px;top:23.799999999999997px;width:37px;height:1.1px;background:#a08a8e;opacity:.55"></div><div class="a" style="left:40px;top:27.6px;width:38px;height:1.1px;background:#a08a8e;opacity:.55"></div><div class="a" style="left:40px;top:31.4px;width:38px;height:1.1px;background:#a08a8e;opacity:.55"></div><div class="a" style="left:40px;top:35.199999999999996px;width:38px;height:1.1px;background:#a08a8e;opacity:.55"></div><div class="a" style="left:40px;top:39.0px;width:20px;height:1.1px;background:#a08a8e;opacity:.55"></div></div>
<div class="a" style="left:10px;top:200.7px;width:83px;height:46.8px;background:#fdf0ec;overflow:hidden;box-shadow:0 0 0 .5px #d9dade"><div class="a" style="left:0px;top:0px;width:83px;height:4.4px;background:linear-gradient(#f00000,#b00006);"></div><div class="ttl" style="width:83px;top:.9px;font-size:2.600px;font-weight:700">训练课七步骤</div><span class="t" style="left:7px;top:8.5px;font-size:2.800px;color:#222;font-weight:bold">✎ 热身</span><span class="t" style="left:7px;top:15.1px;font-size:2.800px;color:#222;font-weight:bold">✎ 技术</span><span class="t" style="left:7px;top:21.7px;font-size:2.800px;color:#222;font-weight:bold">✎ 战术</span><span class="t" style="left:7px;top:28.299999999999997px;font-size:2.800px;color:#222;font-weight:bold">✎ 比赛</span><span class="t" style="left:7px;top:34.9px;font-size:2.800px;color:#222;font-weight:bold">✎ 放松</span><div class="a" style="left:31px;top:6.5px;width:52px;height:37.5px;background:linear-gradient(#c3d6e8 0%,#d3e0ea 26%,#3f6a3c 38%,#3a7a3a 55%,#4e9a46 100%);"></div><div class="a" style="left:31px;top:18px;width:52px;height:7px;background:#2f5a33;filter:blur(1px)"></div><div class="a" style="left:34px;top:26.0px;width:3px;height:5.5px;background:#2a4fa8;border-radius:1px;filter:blur(.4px)"></div><div class="a" style="left:34.6px;top:31.5px;width:1.8px;height:4.5px;background:#222;filter:blur(.4px)"></div><div class="a" style="left:34.7px;top:24.0px;width:1.6px;height:2px;background:#c9a088;filter:blur(.3px)"></div><div class="a" style="left:39.5px;top:26.8px;width:3px;height:5.5px;background:#c4262c;border-radius:1px;filter:blur(.4px)"></div><div class="a" style="left:40.1px;top:32.3px;width:1.8px;height:4.5px;background:#222;filter:blur(.4px)"></div><div class="a" style="left:40.2px;top:24.8px;width:1.6px;height:2px;background:#c9a088;filter:blur(.3px)"></div><div class="a" style="left:44.5px;top:27.6px;width:3px;height:5.5px;background:#2a4fa8;border-radius:1px;filter:blur(.4px)"></div><div class="a" style="left:45.1px;top:33.1px;width:1.8px;height:4.5px;background:#222;filter:blur(.4px)"></div><div class="a" style="left:45.2px;top:25.6px;width:1.6px;height:2px;background:#c9a088;filter:blur(.3px)"></div><div class="a" style="left:49.5px;top:26.0px;width:3px;height:5.5px;background:#1d3f8f;border-radius:1px;filter:blur(.4px)"></div><div class="a" style="left:50.1px;top:31.5px;width:1.8px;height:4.5px;background:#222;filter:blur(.4px)"></div><div class="a" style="left:50.2px;top:24.0px;width:1.6px;height:2px;background:#c9a088;filter:blur(.3px)"></div><div class="a" style="left:55px;top:26.8px;width:3px;height:5.5px;background:#c4262c;border-radius:1px;filter:blur(.4px)"></div><div class="a" style="left:55.6px;top:32.3px;width:1.8px;height:4.5px;background:#222;filter:blur(.4px)"></div><div class="a" style="left:55.7px;top:24.8px;width:1.6px;height:2px;background:#c9a088;filter:blur(.3px)"></div><div class="a" style="left:60px;top:27.6px;width:3px;height:5.5px;background:#2a4fa8;border-radius:1px;filter:blur(.4px)"></div><div class="a" style="left:60.6px;top:33.1px;width:1.8px;height:4.5px;background:#222;filter:blur(.4px)"></div><div class="a" style="left:60.7px;top:25.6px;width:1.6px;height:2px;background:#c9a088;filter:blur(.3px)"></div><div class="a" style="left:65.5px;top:26.0px;width:3px;height:5.5px;background:#c4262c;border-radius:1px;filter:blur(.4px)"></div><div class="a" style="left:66.1px;top:31.5px;width:1.8px;height:4.5px;background:#222;filter:blur(.4px)"></div><div class="a" style="left:66.2px;top:24.0px;width:1.6px;height:2px;background:#c9a088;filter:blur(.3px)"></div><div class="a" style="left:71px;top:26.8px;width:3px;height:5.5px;background:#2a4fa8;border-radius:1px;filter:blur(.4px)"></div><div class="a" style="left:71.6px;top:32.3px;width:1.8px;height:4.5px;background:#222;filter:blur(.4px)"></div><div class="a" style="left:71.7px;top:24.8px;width:1.6px;height:2px;background:#c9a088;filter:blur(.3px)"></div><div class="a" style="left:76.5px;top:27.6px;width:3px;height:5.5px;background:#1d3f8f;border-radius:1px;filter:blur(.4px)"></div><div class="a" style="left:77.1px;top:33.1px;width:1.8px;height:4.5px;background:#222;filter:blur(.4px)"></div><div class="a" style="left:77.2px;top:25.6px;width:1.6px;height:2px;background:#c9a088;filter:blur(.3px)"></div></div>
<div class="a" style="left:10px;top:259.2px;width:83px;height:46.8px;background:#fdebe8;overflow:hidden;box-shadow:0 0 0 .5px #d9dade"><div class="a" style="left:0px;top:0px;width:83px;height:4.4px;background:linear-gradient(#f00000,#b00006);"></div><span class="t" style="left:1.5px;top:.9px;font-size:2.600px;color:#fff;font-weight:700">一 对抗练习与比赛的引入</span><div class="a" style="left:4px;top:6.5px;width:34px;height:1px;background:#a07078;opacity:.5"></div><div class="a" style="left:4px;top:9.1px;width:35px;height:1px;background:#a07078;opacity:.5"></div><div class="a" style="left:4px;top:11.7px;width:34px;height:1px;background:#a07078;opacity:.5"></div><div class="a" style="left:4px;top:14.3px;width:35px;height:1px;background:#a07078;opacity:.5"></div><div class="a" style="left:4px;top:16.9px;width:32px;height:1px;background:#a07078;opacity:.5"></div><div class="a" style="left:4px;top:19.5px;width:35px;height:1px;background:#a07078;opacity:.5"></div><div class="a" style="left:4px;top:22.1px;width:34px;height:1px;background:#a07078;opacity:.5"></div><div class="a" style="left:4px;top:24.7px;width:26px;height:1px;background:#a07078;opacity:.5"></div><div class="a" style="left:4px;top:27.3px;width:30px;height:1px;background:#a07078;opacity:.5"></div><div class="a" style="left:4px;top:29.900000000000002px;width:28px;height:1px;background:#a07078;opacity:.5"></div><div class="a" style="left:4px;top:32.5px;width:24px;height:1px;background:#a07078;opacity:.5"></div><div class="a" style="left:4px;top:35.1px;width:33px;height:1px;background:#a07078;opacity:.5"></div><div class="a" style="left:4px;top:37.7px;width:33px;height:1px;background:#a07078;opacity:.5"></div><div class="a" style="left:4px;top:40.300000000000004px;width:34px;height:1px;background:#a07078;opacity:.5"></div><div class="a" style="left:4px;top:42.9px;width:33px;height:1px;background:#a07078;opacity:.5"></div><div class="a" style="left:2px;top:40px;width:36px;height:0.7px;background:#d02020;opacity:.7"></div><div class="a" style="left:40.7px;top:9.4px;width:41.5px;height:36.4px;background:#00d455;"></div><div class="a" style="left:42px;top:11.5px;width:12px;height:11px;border:.4px solid #b8f5cc"></div><div class="a" style="left:42px;top:26px;width:13px;height:17px;border:.4px solid #b8f5cc"></div><div class="a" style="left:58px;top:11.5px;width:22px;height:28px;border:.4px solid #b8f5cc"></div></div>
<div class="a" style="left:10px;top:317.8px;width:83px;height:4.4px;background:linear-gradient(#f00000,#b00006);"></div>
<span class="t" style="left:11.5px;top:318.88px;font-size:2.6px;color:#fff;font-weight:700">一 教学反思</span>
<div class="a" style="left:0px;top:323px;width:104px;height:17.2px;background:#f6f7f9;"></div>
<svg width="7" height="7" viewBox="0 0 7 7" style="left:44px;top:328.6px;"><path d="M3.500 0v7M0 3.500h7" stroke="#666" stroke-width=".8"/></svg>
<div class="a" style="left:-3px;top:298.6px;width:30px;height:29px;background:rgba(168,170,174,.86);border-radius:3px"></div>
<div class="a" style="left:2.4px;top:305.6px;width:1.4px;height:1.4px;background:#fff;"></div><div class="a" style="left:5.4px;top:305.7px;width:11.6px;height:1.3px;background:#fff;"></div>
<div class="a" style="left:5px;top:311.7px;width:1.4px;height:1.4px;background:#fff;"></div><div class="a" style="left:8px;top:311.8px;width:9px;height:1.3px;background:#fff;"></div>
<div class="a" style="left:2.4px;top:317.8px;width:1.4px;height:1.4px;background:#f4f4f4;"></div><div class="a" style="left:5.4px;top:317.9px;width:6px;height:1.3px;background:#f0f0f0;"></div>
<span class="t" style="left:2.4px;top:320.99px;font-size:5.6px;color:#444;">6</span>
</div>
<div id="edit" class="a">
    <div id="slide" class="a">
      <div class="a" style="left:-10px;top:-10px;width:120px;height:300px;background:linear-gradient(90deg,#fad2ce,rgba(251,221,214,0))"></div>
      <div class="a" style="left:200px;top:-14px;width:120px;height:76px;background:#feece2;filter:blur(9px);border-radius:40%"></div>
      <div class="a" style="left:230px;top:160px;width:160px;height:130px;background:#fbe8de;filter:blur(12px)"></div>
      <div class="a" style="left:194px;top:156px;width:32px;height:78px;background:#cdd3ea;filter:blur(4px);transform:rotate(-12deg)"></div>
      <div class="a" style="left:188px;top:156px;width:9px;height:62px;background:#efe5b0;filter:blur(3px);transform:rotate(-14deg)"></div>
      <div class="a" style="left:216px;top:222px;width:30px;height:10px;background:#f0e6b6;filter:blur(3.500px);transform:rotate(-8deg)"></div>
      <div class="a" style="left:316px;top:168px;width:56px;height:11px;background:#efe7b2;filter:blur(3.500px);transform:rotate(27deg);transform-origin:0 0"></div>
      <div class="a" style="left:326px;top:154px;width:34px;height:16px;background:#d9e2ee;filter:blur(4px);transform:rotate(20deg);transform-origin:0 0"></div>
      <div class="a bg1" style="left:318px;background:#eaf1e9;transform:skewX(16deg)"></div>
      <svg width="491" height="277" viewBox="0 0 491 277" style="left:0;top:0">
        <defs><filter id="fb1" x="-20%" y="-20%" width="140%" height="140%"><feGaussianBlur stdDeviation="0.9"/></filter>
        <clipPath id="cpb"><polygon points="212,150 211,156 241.500,198.500 287.500,196.300 317.600,172 311,150"/></clipPath></defs>
        <g filter="url(#fb1)">
          <polygon points="209,148 208.500,156.500 240,201 288.500,198.800 320.500,173 313.500,148" fill="#e6e3df"/>
          <polygon points="212,150 211,156 241.500,198.500 287.500,196.300 317.600,172 311,150" fill="#f6f4f2"/>
          <g clip-path="url(#cpb)">
            <circle cx="267" cy="160" r="27.500" fill="#fbfaf9" stroke="#d8d5d2" stroke-width="1"/>
            <polygon points="258,166 270,163 276,172 267,180 256,176" fill="#d9d6d3"/>
            <polygon points="284,158 294,160 293,171 284,172" fill="#dcd9d6"/>
            <polygon points="240,158 249,157 251,167 243,171" fill="#dcd9d6"/>
            <path d="M236 150l22 12M244 150l20 10M252 150l18 8" stroke="#f0c48e" stroke-width="3"/>
            <path d="M240 150l22 12" stroke="#e89a8a" stroke-width="2"/>
          </g>
        </g>
        <path id="arcb" d="M236.500,172 Q250,196 268,193.500 Q289,191 298.500,168" fill="none"/>
        <text font-size="5.2" fill="#bab7b3" letter-spacing=".15" font-family="Liberation Sans, sans-serif"><textPath href="#arcb" startOffset="1">SHANDONG LUNENG TAISHAN</textPath></text>
      </svg>
      <span class="t" style="left:4px;top:172px;font-size:40px;color:#fff;opacity:.42;font-weight:bold;font-style:italic;filter:blur(1.200px)">S</span>
      <span class="t" style="left:6px;top:236px;font-size:36px;color:#fff;opacity:.38;font-style:italic;filter:blur(1.200px);letter-spacing:6px">re</span>
      <div class="a" style="left:54px;top:27px;width:36px;height:18px;background:#fbf3ee;filter:blur(1.500px);transform:rotate(-22deg);border-radius:3px;opacity:.8"></div>
      <div class="a band"></div>
      <div class="ttl" style="top:87.5px;font-size:28px;letter-spacing:3.2px;padding-left:3px">疫情防控下</div>
      <div class="ttl" style="top:118px;font-size:28px;letter-spacing:3.05px;padding-left:8px">线上足球训练课分享</div>
      <div class="ttl" style="top:205.5px;font-size:15px;letter-spacing:1.8px;color:#111;font-weight:900;padding-left:3px">张立国</div>
      <div class="ttl" style="top:232.8px;font-size:10px;color:#111;font-weight:700;letter-spacing:.35px">2022年4月14日</div>
    </div>
  </div>
<div id="props" class="a">
<span class="t" style="left:3.8px;top:5.78px;font-size:6.1px;color:#333;">对象属性</span>
<span class="t" style="left:30px;top:6.68px;font-size:4px;color:#666;">▾</span>
<svg width="7.4" height="7.6" viewBox="0 0 7.4 7.6" style="left:110.6px;top:4.6px;"><path d="M3.700.400c1.400 0 2.200 1 2.200 2.400v1.600l1 1.400H.5l1-1.400V2.800C1.500 1.400 2.300.4 3.700.4zM2.800 6.600c.2.600 1.600.6 1.800 0" fill="none" stroke="#666" stroke-width=".7"/></svg>
<svg width="6" height="6" viewBox="0 0 6 6" style="left:123.2px;top:5.4px;"><path d="M.3.300l5.400 5.400M5.700.300L.3 5.700" stroke="#555" stroke-width=".8"/></svg>
<svg width="11.4" height="11" viewBox="0 0 11.4 11" style="left:7.6px;top:16.2px;"><path d="M5 .800L9.400 5 5.400 9.400 1 5.200z" fill="none" stroke="#444" stroke-width=".9"/><path d="M1.800 1.800L5 .8" stroke="#444" stroke-width=".8"/><path d="M10.400 6c.8 1.400.9 2.400 0 2.800-.9-.4-.8-1.400 0-2.800z" fill="#5b7af5"/></svg>
<span class="t" style="left:7.2px;top:31.22px;font-size:6px;color:#e5502c;">填充</span>
<div class="a" style="left:6px;top:40.6px;width:123.5px;height:0.5px;background:#dfe0e4;"></div>
<div class="a" style="left:6px;top:40.3px;width:15.5px;height:1px;background:#e5502c;"></div>
<svg width="3.4" height="3.4" viewBox="0 0 3.4 3.4" style="left:5.6px;top:54.2px;"><path d="M3.400 0v3.400H0z" fill="#e5502c"/></svg>
<span class="t" style="left:9.6px;top:53.22px;font-size:6px;color:#e5502c;font-weight:bold">填充</span>
<div class="a" style="left:69.2px;top:49.6px;width:55.6px;height:12.4px;background:linear-gradient(90deg,#fbd7cf 0%,#fde9e2 45%,#e6efe4 85%,#fff 86%);border:.6px solid #d6d7dc;border-radius:1px"></div>
<span class="t" style="left:118.8px;top:54.28px;font-size:4px;color:#555;">▾</span>
<div class="a" style="left:10.2px;top:68.7px;width:6.4px;height:6.4px;background:#fff;border:.6px solid #9a9ca2;border-radius:50%"></div>
<span class="t" style="left:19px;top:69.32px;font-size:6px;color:#333;">纯色填充(S)</span>
<div class="a" style="left:10.2px;top:80.7px;width:6.4px;height:6.4px;background:#fff;border:.6px solid #9a9ca2;border-radius:50%"></div>
<span class="t" style="left:19px;top:81.32px;font-size:6px;color:#333;">渐变填充(G)</span>
<div class="a" style="left:10.2px;top:92.6px;width:6.4px;height:6.4px;background:#fff;border:.6px solid #9a9ca2;border-radius:50%"></div>
<div class="a" style="left:11.9px;top:94.3px;width:3px;height:3px;background:#222;border-radius:50%"></div>
<span class="t" style="left:19px;top:93.22px;font-size:6px;color:#333;">图片或纹理填充(P)</span>
<div class="a" style="left:10.2px;top:104.5px;width:6.4px;height:6.4px;background:#fff;border:.6px solid #9a9ca2;border-radius:50%"></div>
<span class="t" style="left:19px;top:105.12px;font-size:6px;color:#333;">图案填充(A)</span>
<div class="a" style="left:10.2px;top:116.3px;width:6.4px;height:6.4px;background:#fff;border:.6px solid #9a9ca2"></div>
<span class="t" style="left:19px;top:116.92px;font-size:6px;color:#333;">隐藏背景图形(H)</span>
<span class="t" style="left:9.4px;top:140.92px;font-size:6px;color:#333;">图片填充</span>
<div class="a" style="left:74.3px;top:137.8px;width:50.5px;height:11.8px;background:#fff;border:.6px solid #d6d7dc;border-radius:1px"></div>
<span class="t" style="left:77px;top:141.21px;font-size:5.8px;color:#333;">请选择图片</span>
<span class="t" style="left:119.2px;top:141.98px;font-size:4px;color:#555;">▾</span>
<span class="t" style="left:9.4px;top:156.42px;font-size:6px;color:#333;">纹理填充(U)</span>
<div class="a" style="left:94.6px;top:152.6px;width:30.2px;height:12px;background:#fff;border:.6px solid #d6d7dc;border-radius:1px"></div>
<div class="a" style="left:101.6px;top:155.6px;width:5.6px;height:5.6px;background:#9fb4e6;border:.5px solid #6c86c8;opacity:.8"></div>
<span class="t" style="left:119.2px;top:157.08px;font-size:4px;color:#555;">▾</span>
<span class="t" style="left:9.4px;top:173.32px;font-size:6px;color:#333;">透明度(T)</span>
<div class="a" style="left:70px;top:172.8px;width:6.4px;height:6.4px;background:#fff;border:.6px solid #888;border-radius:50%"></div>
<div class="a" style="left:71.6px;top:175.7px;width:3.2px;height:0.6px;background:#666;"></div>
<div class="a" style="left:77.4px;top:175.5px;width:38px;height:1px;background:#f3a392;"></div>
<svg width="4" height="3" viewBox="0 0 4 3" style="left:108px;top:176.4px;"><path d="M2 0l2 3H0z" fill="#e8452a"/></svg>
<span class="t" style="left:104px;top:168.85px;font-size:6.4px;color:#444;">88%</span>
<div class="a" style="left:118.2px;top:172.8px;width:6.4px;height:6.4px;background:#fff;border:.6px solid #888;border-radius:50%"></div>
<div class="a" style="left:119.8px;top:175.7px;width:3.2px;height:0.6px;background:#666;"></div>
<div class="a" style="left:121.1px;top:174.4px;width:0.6px;height:3.2px;background:#666;"></div>
<span class="t" style="left:9.4px;top:190.32px;font-size:6px;color:#333;">放置方式(I)</span>
<div class="a" style="left:76.3px;top:187.1px;width:48.5px;height:10.8px;background:#fff;border:.6px solid #d6d7dc;border-radius:1px"></div>
<span class="t" style="left:78.5px;top:190.11px;font-size:5.8px;color:#333;">拉伸</span>
<span class="t" style="left:119.2px;top:190.88px;font-size:4px;color:#555;">▾</span>
<span class="t" style="left:14.2px;top:207.22px;font-size:6px;color:#333;">向左偏移(L)</span>
<div class="a" style="left:68.7px;top:204.6px;width:56.3px;height:10.2px;background:#fff;border:.6px solid #d9dade"></div>
<div class="a" style="left:80px;top:204.6px;width:0.6px;height:10.2px;background:#d9dade;"></div>
<div class="a" style="left:113.8px;top:204.6px;width:0.6px;height:10.2px;background:#d9dade;"></div>
<div class="a" style="left:72.6px;top:209.5px;width:3.4px;height:0.6px;background:#666;"></div>
<span class="t" style="left:82.4px;top:206.96px;font-size:6.6px;color:#333;">0%</span>
<div class="a" style="left:117.6px;top:209.5px;width:3.6px;height:0.6px;background:#777;"></div>
<div class="a" style="left:119.1px;top:208.0px;width:0.6px;height:3.6px;background:#777;"></div>
<span class="t" style="left:14.2px;top:220.72px;font-size:6px;color:#333;">向右偏移(R)</span>
<div class="a" style="left:68.7px;top:218.1px;width:56.3px;height:10.2px;background:#fff;border:.6px solid #d9dade"></div>
<div class="a" style="left:80px;top:218.1px;width:0.6px;height:10.2px;background:#d9dade;"></div>
<div class="a" style="left:113.8px;top:218.1px;width:0.6px;height:10.2px;background:#d9dade;"></div>
<div class="a" style="left:72.6px;top:223.0px;width:3.4px;height:0.6px;background:#666;"></div>
<span class="t" style="left:82.4px;top:220.46px;font-size:6.6px;color:#333;">0%</span>
<div class="a" style="left:117.6px;top:223.0px;width:3.6px;height:0.6px;background:#777;"></div>
<div class="a" style="left:119.1px;top:221.5px;width:0.6px;height:3.6px;background:#777;"></div>
<span class="t" style="left:14.2px;top:234.02px;font-size:6px;color:#333;">向上偏移(O)</span>
<div class="a" style="left:68.7px;top:231.4px;width:56.3px;height:10.2px;background:#fff;border:.6px solid #d9dade"></div>
<div class="a" style="left:80px;top:231.4px;width:0.6px;height:10.2px;background:#d9dade;"></div>
<div class="a" style="left:113.8px;top:231.4px;width:0.6px;height:10.2px;background:#d9dade;"></div>
<div class="a" style="left:72.6px;top:236.3px;width:3.4px;height:0.6px;background:#666;"></div>
<span class="t" style="left:82.4px;top:233.76px;font-size:6.6px;color:#333;">0%</span>
<div class="a" style="left:117.6px;top:236.3px;width:3.6px;height:0.6px;background:#777;"></div>
<div class="a" style="left:119.1px;top:234.8px;width:0.6px;height:3.6px;background:#777;"></div>
<span class="t" style="left:14.2px;top:247.52px;font-size:6px;color:#333;">向下偏移(M)</span>
<div class="a" style="left:68.7px;top:244.9px;width:56.3px;height:10.2px;background:#fff;border:.6px solid #d9dade"></div>
<div class="a" style="left:80px;top:244.9px;width:0.6px;height:10.2px;background:#d9dade;"></div>
<div class="a" style="left:113.8px;top:244.9px;width:0.6px;height:10.2px;background:#d9dade;"></div>
<div class="a" style="left:72.6px;top:249.8px;width:3.4px;height:0.6px;background:#666;"></div>
<span class="t" style="left:82.4px;top:247.26px;font-size:6.6px;color:#333;">0%</span>
<div class="a" style="left:117.6px;top:249.8px;width:3.6px;height:0.6px;background:#777;"></div>
<div class="a" style="left:119.1px;top:248.3px;width:0.6px;height:3.6px;background:#777;"></div>
<div class="a" style="left:9.8px;top:265.0px;width:6.4px;height:6.4px;background:#f8f8f9;border:.6px solid #cfd0d5"></div>
<span class="t" style="left:19.6px;top:265.52px;font-size:6px;color:#b4b5ba;letter-spacing:.25px">与形状一起旋转(W)</span>
<div class="a" style="left:5px;top:323.0px;width:29.4px;height:12px;background:#fff;border:.6px solid #d2d3d8;border-radius:1px"></div>
<span class="t" style="left:5px;top:326.62px;font-size:6px;color:#333;width:29.4px;text-align:center;">全部应用</span>
<span class="t" style="left:40px;top:326.62px;font-size:6px;color:#aaa;">重置背景</span>
</div>
<div class="a" style="left:613.6px;top:63.800000000000004px;width:7.4px;height:340.2px;background:#f4f5f7;"></div>
<div class="a" style="left:614.4px;top:76.0px;width:5.4px;height:19.6px;background:#d3d5da;border-radius:1.500px"></div>
<span class="t" style="left:615.6px;top:69.28px;font-size:4px;color:#777;">▴</span>
<span class="t" style="left:615.6px;top:370.68px;font-size:4px;color:#777;">▾</span>
<span class="t" style="left:615.6px;top:381.08px;font-size:4px;color:#777;">▴</span>
<span class="t" style="left:615.6px;top:388.68px;font-size:4px;color:#777;">▾</span>
<div id="strip" class="a">
<div class="a" style="left:2.6px;top:33.2px;width:17px;height:16px;background:#d9dce3;border-radius:1.500px"></div>
<div class="a" style="left:6.5px;top:6.9px;width:9px;height:0.6px;background:#c4c6cb;"></div><div class="a" style="left:6.5px;top:8.9px;width:9px;height:0.6px;background:#c4c6cb;"></div>
<svg width="8" height="8" viewBox="0 0 8 8" style="left:7px;top:18.6px;"><path d="M1 5.800C1.400 2.400 3.800.6 7.400.6 7.200 4 5.600 6.400 2.400 7zM1 5.800L.4 7.600 2.400 7M3 3.600L.8 3.400M4.600 5.200l.2 2.200" fill="none" stroke="#555" stroke-width=".8"/></svg>
<svg width="8" height="8" viewBox="0 0 8 8" style="left:7px;top:37.0px;"><path d="M.2 2h7.600M.2 6h7.600" fill="none" stroke="#555" stroke-width=".8"/><circle cx="2.600" cy="2" r="1.100" fill="none" stroke="#555" stroke-width=".8" fill="#d9dce3"/><circle cx="5.600" cy="6" r="1.100" fill="none" stroke="#555" stroke-width=".8" fill="#d9dce3"/></svg>
<svg width="8" height="8" viewBox="0 0 8 8" style="left:7px;top:54.6px;"><path d="M4 .400l2.600 2.800-1 3H2.400l-1-3zM2.800 6.200L4 7.800l1.200-1.600M.2 4.600l1.200-.8M7.800 4.600l-1.200-.8" fill="none" stroke="#555" stroke-width=".8"/></svg>
<svg width="8" height="8" viewBox="0 0 8 8" style="left:7px;top:73.8px;"><path d="M.6.600h6.800v5.600H4.400L2.600 7.800V6.200H.6z" fill="none" stroke="#555" stroke-width=".8"/></svg>
<svg width="8" height="8" viewBox="0 0 8 8" style="left:7px;top:91.8px;"><circle cx="4" cy="4" r="3.500" fill="none" stroke="#555" stroke-width=".8"/><path d="M2.800 3c.2-1.400 2.400-1.400 2.400 0 0 .9-1.200.9-1.200 2M4 5.800v.5" fill="none" stroke="#555" stroke-width=".8" stroke-width=".7"/></svg>
<svg width="8.4" height="8" viewBox="0 0 8.4 8" style="left:7px;top:110.4px;"><path d="M.4 1.200h5.200v4.200H.4zM2 5.400v1.400h5.800V3H5.600" fill="none" stroke="#555" stroke-width=".8"/><circle cx="6.200" cy="6" r="1.600" fill="none" stroke="#555" stroke-width=".8"/></svg>
<span class="t" style="left:7.4px;top:327.02px;font-size:6px;color:#777;letter-spacing:.6px">···</span>
</div>
<div id="status" class="a">
<span class="t" style="left:-6.5px;top:4.62px;font-size:6px;color:#444;letter-spacing:.3px">幻灯片 <span style="font-size:6.8px">1 / 13</span></span>
<div class="a" style="left:38px;top:3px;width:0.5px;height:9px;background:#dfe0e4;"></div>
<span class="t" style="left:44.6px;top:4.62px;font-size:6px;color:#444;letter-spacing:.15px">Office 主题</span>
<div class="a" style="left:81px;top:3px;width:0.5px;height:9px;background:#dfe0e4;"></div>
<svg width="6.4" height="6.8" viewBox="0 0 6.4 6.8" style="left:446px;top:3.8000000000000003px;"><path d="M3.200.300l2.800 1.600v3L3.200 6.500.4 4.900v-3z" fill="none" stroke="#555" stroke-width=".75"/><path d="M3.200 2.200v2.400M2 3.400h2.400" fill="none" stroke="#555" stroke-width=".75" stroke-width=".6"/></svg>
<span class="t" style="left:455px;top:4.62px;font-size:6px;color:#444;">智能美化</span>
<span class="t" style="left:483.4px;top:5.48px;font-size:4px;color:#666;">▾</span>
<div class="a" style="left:498.4px;top:4.6px;width:8px;height:0.7px;background:#555;"></div><div class="a" style="left:498.4px;top:6.9px;width:8px;height:0.7px;background:#555;"></div><div class="a" style="left:498.4px;top:9.2px;width:5px;height:0.7px;background:#555;"></div>
<span class="t" style="left:508px;top:4.62px;font-size:6px;color:#444;">备注</span>
<span class="t" style="left:522.6px;top:5.48px;font-size:4px;color:#666;">▾</span>
<svg width="8" height="7.4" viewBox="0 0 8 7.4" style="left:529.4px;top:3.6px;"><path d="M5 .600H.5v5h1.300v1.600l1.800-1.600H6.500V3" fill="none" stroke="#555" stroke-width=".75"/><path d="M6.200 0v3M4.700 1.500h3" stroke="#555" stroke-width=".8"/></svg>
<span class="t" style="left:539.6px;top:4.62px;font-size:6px;color:#444;">批注</span>
<div class="a" style="left:561.4px;top:2.2px;width:11px;height:10px;background:#e1e3e8;border-radius:1px"></div>
<svg width="7" height="6.8" viewBox="0 0 7 6.8" style="left:563.4px;top:3.8000000000000003px;"><rect x=".4" y=".4" width="6.200" height="6" fill="none" stroke="#555" stroke-width=".75"/><path d="M2.400.400v6M2.400 2.400h4.200" fill="none" stroke="#555" stroke-width=".75"/></svg>
<svg width="7" height="6.8" viewBox="0 0 7 6.8" style="left:577px;top:3.8000000000000003px;"><rect x=".4" y=".4" width="2.400" height="2.400" fill="none" stroke="#555" stroke-width=".75"/><rect x="4" y=".4" width="2.400" height="2.400" fill="none" stroke="#555" stroke-width=".75"/><rect x=".4" y="4" width="2.400" height="2.400" fill="none" stroke="#555" stroke-width=".75"/><rect x="4" y="4" width="2.400" height="2.400" fill="none" stroke="#555" stroke-width=".75"/></svg>
<svg width="8" height="6.8" viewBox="0 0 8 6.8" style="left:589px;top:3.8000000000000003px;"><path d="M4 1.200C3 .4 1.600.4.4.800v5.400c1.200-.4 2.600-.4 3.600.4 1-.8 2.400-.8 3.600-.4V.8C6.400.4 5 .4 4 1.200zM4 1.200v5.400" fill="none" stroke="#555" stroke-width=".75"/></svg>
<div class="a" style="left:608px;top:2.0px;width:16.6px;height:10.6px;background:#5d6b98;border-radius:1px"></div>
<svg width="6" height="6" viewBox="0 0 6 6" style="left:613.6px;top:4.2px;"><path d="M.4.200l5 2.800-5 2.800z" fill="#fff"/></svg>
<span class="t" style="left:626.6px;top:5.48px;font-size:4px;color:#666;">▾</span>
<svg width="6.8" height="6.8" viewBox="0 0 6.8 6.8" style="left:640px;top:3.8000000000000003px;"><path d="M.4 2V.4H2M4.800.400h1.600V2M6.400 4.800v1.600H4.800M2 6.400H.4V4.800" fill="none" stroke="#555" stroke-width=".75"/><rect x="2" y="2" width="2.800" height="2.800" fill="none" stroke="#555" stroke-width=".75"/></svg>
<span class="t" style="left:652.6px;top:4.36px;font-size:6.6px;color:#444;">75%</span>
<span class="t" style="left:665.4px;top:5.48px;font-size:4px;color:#666;">▾</span>
<div class="a" style="left:675px;top:6.9px;width:4.6px;height:0.7px;background:#666;"></div>
<div class="a" style="left:686px;top:7.0px;width:69px;height:0.6px;background:#9a9ca2;"></div>
<div class="a" style="left:707.6px;top:4.2px;width:6px;height:6px;background:#fff;border:.7px solid #666;border-radius:50%"></div>
<div class="a" style="left:762.6px;top:6.9px;width:5px;height:0.7px;background:#666;"></div><div class="a" style="left:764.75px;top:4.7px;width:0.7px;height:5px;background:#666;"></div>
</div>
<div class="a" style="left:105px;top:397.2px;width:508px;height:7px;background:#f4f5f7;"></div>
<div class="a" style="left:116px;top:397.79999999999995px;width:464px;height:5.4px;background:#d7d9de;border-radius:2.700px"></div>
<span class="t" style="left:106.6px;top:398.88px;font-size:4px;color:#777;">◂</span>
<span class="t" style="left:608px;top:398.88px;font-size:4px;color:#777;">▸</span>
</div>
<div id="rp" class="a">
<div class="a" style="left:0px;top:0px;width:163px;height:18px;background:linear-gradient(90deg,rgba(43,45,48,0) 0%,rgba(43,45,48,.55) 45%,rgba(38,40,43,.95) 100%);"></div>
<div class="a" style="left:0px;top:0px;width:163px;height:6px;background:linear-gradient(rgba(40,42,45,.6),rgba(40,42,45,0));"></div>
<div class="a" style="left:2px;top:258px;width:0.8px;height:24px;background:#a2a4a7;"></div><div class="a" style="left:4.4px;top:258px;width:0.8px;height:24px;background:#a2a4a7;"></div>
<div class="tile" style="top:17.600px;height:86.200px"><div class="a" style="left:0px;top:0px;width:153px;height:10px;background:linear-gradient(90deg,#4c8fe8 0%,#2f7ae4 30%,#2274e6 50%,#2f7ae4 72%,#5c9cec 100%);"></div><div class="a" style="left:-4px;top:3px;width:40px;height:8px;background:#d4e6fa;filter:blur(2.500px);border-radius:50%"></div><div class="a" style="left:40px;top:6.5px;width:70px;height:5px;background:#cfe2f8;filter:blur(2.500px);border-radius:50%;opacity:.8"></div><div class="a" style="left:122px;top:3px;width:40px;height:8px;background:#cfe3fa;filter:blur(2.500px);border-radius:50%"></div><div class="a" style="left:0px;top:9.5px;width:153px;height:49px;background:linear-gradient(#e3edf7 0%,#edf2f4 40%,#eef2ee 70%,#e4ecdf 100%);"></div><div class="a" style="left:30px;top:12px;width:96px;height:44px;background:#f3f5f4;filter:blur(6px)"></div><div class="a" style="left:-6px;top:34px;width:30px;height:26px;background:#cfe0c6;filter:blur(5px)"></div><div class="a" style="left:128px;top:26px;width:32px;height:34px;background:#c9dcc2;filter:blur(5px)"></div><div class="a" style="left:0px;top:58px;width:153px;height:29px;background:linear-gradient(#55843a 0%,#38632a 45%,#4b7636 100%);"></div><div class="a" style="left:30px;top:62px;width:24px;height:12px;background:#2f5522;filter:blur(3px)"></div><div class="a" style="left:110px;top:60px;width:30px;height:10px;background:#3a6428;filter:blur(3px)"></div><div class="a" style="left:0px;top:70px;width:20px;height:14px;background:#6f9650;filter:blur(3px)"></div><div class="a" style="left:0px;top:58px;width:153px;height:5px;background:#7fa860;filter:blur(1.500px);opacity:.7"></div><div class="a" style="left:104px;top:74px;width:49px;height:13px;background:#8a9a78;filter:blur(2px)"></div><div class="a" style="left:112px;top:72px;width:22px;height:9px;background:#c4a58e;filter:blur(1.500px)"></div><div class="a" style="left:20px;top:62px;width:10px;height:22px;background:#2f4f22;filter:blur(2px)"></div><span class="t" style="left:22.600px;top:23.200px;font-size:9.050px;font-weight:bold;color:#25272b;letter-spacing:0">体育学院线上教学经验交流会</span><div class="a" style="left:22px;top:37.2px;width:113px;height:0.6px;background:#9aa3ad;"></div><div class="a" style="left:45px;top:36.8px;width:28px;height:1.2px;background:#2d5f9a;"></div><div class="a" style="left:35.4px;top:44.6px;width:5px;height:5px;background:#1f63b4;border-radius:50%"></div><span class="t" style="left:43px;top:45.74px;font-size:3.4px;color:#7c8790;">时间: 2022年4月14日　　地点: 山东大学</span><div class="a" style="left:40px;top:77px;width:86px;height:14px;background:#1d1d22;border-radius:40px 30px 0 0;filter:blur(1.200px)"></div><div class="a" style="left:98px;top:73px;width:28px;height:16px;background:#1b1b20;border-radius:4px 60% 0 0;filter:blur(1.200px)"></div><div class="a" style="left:65px;top:38px;width:38px;height:56px;background:radial-gradient(ellipse at 40% 45%,#dcb0a0 0%,#d2a392 40%,#bb8876 78%,#a87664 100%);border-radius:46% 46% 50% 50%;filter:blur(.9px)"></div><div class="a" style="left:60.5px;top:27px;width:44px;height:21px;background:#211e28;border-radius:50% 50% 36% 36%;filter:blur(.9px)"></div><div class="a" style="left:60.5px;top:38px;width:6.5px;height:20px;background:#221f29;filter:blur(1.200px);border-radius:0 0 40% 40%"></div><div class="a" style="left:98.5px;top:38px;width:6px;height:19px;background:#221f29;filter:blur(1.200px);border-radius:0 0 40% 40%"></div><div class="a" style="left:70px;top:50px;width:13.5px;height:9.5px;background:rgba(190,220,205,.22);border:.7px solid rgba(70,62,66,.55);border-radius:4px;filter:blur(.4px)"></div><div class="a" style="left:88.5px;top:50px;width:13px;height:9.5px;background:rgba(190,220,205,.22);border:.7px solid rgba(70,62,66,.55);border-radius:4px;filter:blur(.4px)"></div><div class="a" style="left:73.5px;top:53.5px;width:6px;height:2px;background:#3a2c2c;filter:blur(.8px);opacity:.55"></div><div class="a" style="left:92px;top:53.5px;width:6px;height:2px;background:#3a2c2c;filter:blur(.8px);opacity:.55"></div><div class="a" style="left:84px;top:57px;width:5px;height:12px;background:#b9826e;filter:blur(1.500px);opacity:.6"></div><div class="a" style="left:80px;top:76px;width:11px;height:2.4px;background:#a8625c;filter:blur(.8px)"></div><div class="a" style="left:18px;top:67.6px;width:66px;height:18.8px;background:rgba(24,22,24,.72);"></div><div class="a" style="left:0px;top:67.4px;width:18px;height:19px;background:#ff7a00;"></div><svg width="15" height="14" viewBox="0 0 15 14" style="left:1.6px;top:69.2px;"><circle cx="7.400" cy="4" r="3.100" fill="#fff"/><path d="M.8 13.600c0-4 2.600-5.600 4-6l2.600 1.400L10 7.600c1.400.4 4 2 4 6z" fill="#fff"/></svg><svg width="12" height="14" viewBox="0 0 12 14" style="left:24.4px;top:70.4px;"><rect x="3.600" y=".5" width="4.800" height="8" rx="2.400" fill="#fff"/><path d="M1.400 6.200c0 3 2 4.600 4.600 4.600s4.600-1.600 4.600-4.600M6 10.800v2.600" fill="none" stroke="#fff" stroke-width="1.200"/><path d="M.4 12.600L11.600 1" stroke="#f0323c" stroke-width="1.300"/></svg><span class="t" style="left:42.300px;top:72px;font-size:11.600px;font-weight:bold;color:#fff;letter-spacing:.3px">李拓键</span></div>
<div class="tile" style="top:112.600px;height:86.600px"><div class="a" style="left:0px;top:0px;width:153px;height:87px;background:#37302e;"></div><div class="a" style="left:0px;top:0px;width:23px;height:14.5px;background:#2e2a2a;"></div><div class="a" style="left:0px;top:0px;width:23px;height:14.5px;background:repeating-linear-gradient(55deg,rgba(200,195,190,.28) 0,rgba(200,195,190,.28) .6px,transparent .6px,transparent 2.600px);"></div><div class="a" style="left:24.6px;top:0px;width:16px;height:14.5px;background:#3a3634;"></div><div class="a" style="left:24.6px;top:0px;width:16px;height:14.5px;background:repeating-linear-gradient(125deg,#e6e2dc 0,#e6e2dc 1.200px,transparent 1.200px,transparent 2.800px);"></div><div class="a" style="left:41.5px;top:1px;width:20px;height:13px;background:#b8a898;"></div><div class="a" style="left:41.5px;top:1.5px;width:20px;height:1.5px;background:#c8433a;"></div><div class="a" style="left:41.5px;top:3.6px;width:20px;height:1.5px;background:#e8e2d6;"></div><div class="a" style="left:41.5px;top:5.7px;width:20px;height:1.5px;background:#3f7a6a;"></div><div class="a" style="left:41.5px;top:7.800000000000001px;width:20px;height:1.5px;background:#d8c8a0;"></div><div class="a" style="left:41.5px;top:9.9px;width:20px;height:1.5px;background:#c8433a;"></div><div class="a" style="left:41.5px;top:12.0px;width:20px;height:1.5px;background:#efe9dc;"></div><div class="a" style="left:62px;top:3px;width:1.6px;height:11px;background:#d8603a;"></div><div class="a" style="left:63.6px;top:0px;width:1px;height:14px;background:#e04a3a;"></div><div class="a" style="left:65.1px;top:4px;width:2.4px;height:10px;background:#c2383a;"></div><div class="a" style="left:67.8px;top:3px;width:1px;height:11px;background:#e6e0d4;"></div><div class="a" style="left:69.6px;top:0px;width:1px;height:14px;background:#8a3028;"></div><div class="a" style="left:71.4px;top:1px;width:1px;height:13px;background:#2f2b2b;"></div><div class="a" style="left:72.4px;top:0px;width:2.4px;height:14px;background:#4f9a8a;"></div><div class="a" style="left:75.1px;top:7px;width:1px;height:7px;background:#e04a3a;"></div><div class="a" style="left:76.4px;top:1px;width:1.6px;height:13px;background:#2b2626;"></div><div class="a" style="left:78.0px;top:4px;width:2.4px;height:10px;background:#3f4a55;"></div><div class="a" style="left:80.7px;top:2px;width:1px;height:12px;background:#5a7f88;"></div><div class="a" style="left:81.7px;top:4px;width:2.4px;height:10px;background:#e6e0d4;"></div><div class="a" style="left:0px;top:14.8px;width:86px;height:2.7px;background:#262120;"></div><div class="a" style="left:0px;top:22.0px;width:2.4px;height:17.5px;background:#5a7f88;"></div><div class="a" style="left:3.2px;top:23.0px;width:1.6px;height:16.5px;background:#cfc8ba;"></div><div class="a" style="left:5.6px;top:20.0px;width:1.6px;height:19.5px;background:#3f4a55;"></div><div class="a" style="left:7.5px;top:23.0px;width:1.2px;height:16.5px;background:#e6e0d4;"></div><div class="a" style="left:9.2px;top:21.0px;width:2.4px;height:18.5px;background:#332e2d;"></div><div class="a" style="left:12.4px;top:19.0px;width:1.6px;height:20.5px;background:#e6e0d4;"></div><div class="a" style="left:14.8px;top:20.0px;width:1.2px;height:19.5px;background:#f4efe6;"></div><div class="a" style="left:16.8px;top:24.0px;width:2px;height:15.5px;background:#c2383a;"></div><div class="a" style="left:18.8px;top:21.0px;width:2.4px;height:18.5px;background:#f4efe6;"></div><div class="a" style="left:21.7px;top:23.0px;width:2.4px;height:16.5px;background:#332e2d;"></div><div class="a" style="left:24.9px;top:21.0px;width:1px;height:18.5px;background:#e6e0d4;"></div><div class="a" style="left:26.7px;top:24.0px;width:1px;height:15.5px;background:#c2383a;"></div><div class="a" style="left:28.2px;top:21.0px;width:2.4px;height:18.5px;background:#cfc8ba;"></div><div class="a" style="left:31.4px;top:22.0px;width:1.6px;height:17.5px;background:#d8d0c4;"></div><div class="a" style="left:33.5px;top:22.0px;width:1.2px;height:17.5px;background:#2f2b2b;"></div><div class="a" style="left:34.7px;top:20.0px;width:1.2px;height:19.5px;background:#3f4a55;"></div><div class="a" style="left:36.2px;top:26.0px;width:2px;height:13.5px;background:#4f9a8a;"></div><div class="a" style="left:39.0px;top:22.0px;width:1px;height:17.5px;background:#efe9de;"></div><div class="a" style="left:40.8px;top:20.0px;width:2.4px;height:19.5px;background:#d9b24a;"></div><div class="a" style="left:44.0px;top:24.0px;width:2.4px;height:15.5px;background:#d9b24a;"></div><div class="a" style="left:47.2px;top:20.0px;width:1.6px;height:19.5px;background:#4f9a8a;"></div><div class="a" style="left:49.1px;top:20.0px;width:1px;height:19.5px;background:#efe9de;"></div><div class="a" style="left:50.4px;top:22.0px;width:1.2px;height:17.5px;background:#d8d0c4;"></div><div class="a" style="left:51.9px;top:19.0px;width:1.6px;height:20.5px;background:#3f4a55;"></div><div class="a" style="left:53.8px;top:21.0px;width:2px;height:18.5px;background:#e04a3a;"></div><div class="a" style="left:56.3px;top:23.0px;width:1.2px;height:16.5px;background:#3a3432;"></div><div class="a" style="left:57.5px;top:22.0px;width:2px;height:17.5px;background:#e04a3a;"></div><div class="a" style="left:60.3px;top:19.0px;width:2px;height:20.5px;background:#4f9a8a;"></div><div class="a" style="left:62px;top:23px;width:22px;height:16.5px;background:#3a3230;"></div><div class="a" style="left:63px;top:23.5px;width:20px;height:1.7px;background:#e8e2d6;"></div><div class="a" style="left:63px;top:26.2px;width:20px;height:1.7px;background:#2b2626;"></div><div class="a" style="left:63px;top:28.9px;width:20px;height:1.7px;background:#c8433a;"></div><div class="a" style="left:63px;top:31.6px;width:20px;height:1.7px;background:#d8d2c4;"></div><div class="a" style="left:63px;top:34.3px;width:20px;height:1.7px;background:#5a6f78;"></div><div class="a" style="left:63px;top:37.0px;width:20px;height:1.7px;background:#efe9dc;"></div><div class="a" style="left:0px;top:39.5px;width:86px;height:2.3px;background:#262120;"></div><div class="a" style="left:0px;top:44.7px;width:2px;height:18.8px;background:#c2383a;"></div><div class="a" style="left:2px;top:44.7px;width:1.2px;height:18.8px;background:#cfc8ba;"></div><div class="a" style="left:3.2px;top:43.7px;width:1.6px;height:19.8px;background:#c2383a;"></div><div class="a" style="left:4.8px;top:47.7px;width:2.4px;height:15.8px;background:#d8603a;"></div><div class="a" style="left:7.2px;top:43.7px;width:1.6px;height:19.8px;background:#d8d0c4;"></div><div class="a" style="left:9.1px;top:44.7px;width:2.4px;height:18.8px;background:#4f9a8a;"></div><div class="a" style="left:12.0px;top:46.7px;width:1.6px;height:16.8px;background:#b03a3a;"></div><div class="a" style="left:13.6px;top:46.7px;width:1px;height:16.8px;background:#332e2d;"></div><div class="a" style="left:15.4px;top:43.7px;width:2px;height:19.8px;background:#3f4a55;"></div><div class="a" style="left:17.7px;top:48.7px;width:1px;height:14.8px;background:#f4efe6;"></div><div class="a" style="left:19.2px;top:47.7px;width:2px;height:15.8px;background:#efe9de;"></div><div class="a" style="left:21.2px;top:45.7px;width:1.2px;height:17.8px;background:#3a3432;"></div><div class="a" style="left:22.7px;top:50.7px;width:2.4px;height:12.8px;background:#d8d0c4;"></div><div class="a" style="left:25.6px;top:47.7px;width:1px;height:15.8px;background:#d9b24a;"></div><div class="a" style="left:27.1px;top:50.7px;width:1.2px;height:12.8px;background:#b03a3a;"></div><div class="a" style="left:28.6px;top:50.7px;width:2.4px;height:12.8px;background:#e04a3a;"></div><div class="a" style="left:31.5px;top:50.7px;width:1.2px;height:12.8px;background:#5a7f88;"></div><div class="a" style="left:33.0px;top:44.7px;width:2px;height:18.8px;background:#8a3028;"></div><div class="a" style="left:35.8px;top:43.7px;width:1.6px;height:19.8px;background:#d8d0c4;"></div><div class="a" style="left:37.9px;top:44.7px;width:2px;height:18.8px;background:#d9b24a;"></div><div class="a" style="left:40.4px;top:45.7px;width:2px;height:17.8px;background:#b03a3a;"></div><div class="a" style="left:42.4px;top:44.7px;width:1.2px;height:18.8px;background:#2f2b2b;"></div><div class="a" style="left:44.4px;top:44.7px;width:1.2px;height:18.8px;background:#f4efe6;"></div><div class="a" style="left:46.4px;top:46.7px;width:2.4px;height:16.8px;background:#d8d0c4;"></div><div class="a" style="left:49.3px;top:46.7px;width:1px;height:16.8px;background:#2f2b2b;"></div><div class="a" style="left:50.6px;top:46.7px;width:2px;height:16.8px;background:#efe9de;"></div><div class="a" style="left:53.1px;top:46.7px;width:1px;height:16.8px;background:#4f9a8a;"></div><div class="a" style="left:54.9px;top:44.7px;width:1px;height:18.8px;background:#efe9de;"></div><div class="a" style="left:56.2px;top:47.7px;width:1px;height:15.8px;background:#d8603a;"></div><div class="a" style="left:58.0px;top:48.7px;width:1.2px;height:14.8px;background:#332e2d;"></div><div class="a" style="left:59.7px;top:47.7px;width:1.2px;height:15.8px;background:#e04a3a;"></div><div class="a" style="left:61.2px;top:50.7px;width:1px;height:12.8px;background:#d8d0c4;"></div><div class="a" style="left:62.2px;top:46.7px;width:2.4px;height:16.8px;background:#d8603a;"></div><div class="a" style="left:64.9px;top:45.7px;width:1.2px;height:17.8px;background:#d8d0c4;"></div><div class="a" style="left:66.4px;top:44.7px;width:1.6px;height:18.8px;background:#3a3432;"></div><div class="a" style="left:68.5px;top:46.7px;width:1.6px;height:16.8px;background:#e04a3a;"></div><div class="a" style="left:70.4px;top:46.7px;width:1px;height:16.8px;background:#b03a3a;"></div><div class="a" style="left:72.2px;top:47.7px;width:2.4px;height:15.8px;background:#d8603a;"></div><div class="a" style="left:74.9px;top:43.7px;width:2.4px;height:19.8px;background:#3a3432;"></div><div class="a" style="left:0px;top:63.5px;width:100px;height:2.3px;background:#262120;"></div><div class="a" style="left:18px;top:75px;width:1.2px;height:12px;background:#d8d0c4;"></div><div class="a" style="left:19.5px;top:71px;width:1.2px;height:16px;background:#d8603a;"></div><div class="a" style="left:20.7px;top:70px;width:2.4px;height:17px;background:#c2383a;"></div><div class="a" style="left:23.9px;top:68px;width:1px;height:19px;background:#e04a3a;"></div><div class="a" style="left:25.2px;top:68px;width:1.2px;height:19px;background:#d9b24a;"></div><div class="a" style="left:26.4px;top:72px;width:2.4px;height:15px;background:#cfc8ba;"></div><div class="a" style="left:28.8px;top:70px;width:1px;height:17px;background:#cfc8ba;"></div><div class="a" style="left:30.1px;top:72px;width:1.6px;height:15px;background:#cfc8ba;"></div><div class="a" style="left:32.5px;top:73px;width:2.4px;height:14px;background:#8a3028;"></div><div class="a" style="left:35.4px;top:75px;width:2.4px;height:12px;background:#5a7f88;"></div><div class="a" style="left:38.6px;top:68px;width:1.2px;height:19px;background:#2b2626;"></div><div class="a" style="left:40.6px;top:68px;width:2px;height:19px;background:#f4efe6;"></div><div class="a" style="left:42.9px;top:69px;width:2px;height:18px;background:#e6e0d4;"></div><div class="a" style="left:45.4px;top:73px;width:1px;height:14px;background:#d8603a;"></div><div class="a" style="left:46.9px;top:69px;width:1.2px;height:18px;background:#d9b24a;"></div><div class="a" style="left:48.9px;top:71px;width:1.2px;height:16px;background:#2f2b2b;"></div><div class="a" style="left:50.9px;top:69px;width:1.2px;height:18px;background:#8a3028;"></div><div class="a" style="left:52.9px;top:70px;width:2.4px;height:17px;background:#4f9a8a;"></div><div class="a" style="left:56.1px;top:70px;width:1.2px;height:17px;background:#b03a3a;"></div><div class="a" style="left:57.3px;top:70px;width:1.6px;height:17px;background:#d8d0c4;"></div><div class="a" style="left:59.7px;top:71px;width:2px;height:16px;background:#d8d0c4;"></div><div class="a" style="left:62.2px;top:72px;width:2.4px;height:15px;background:#3f4a55;"></div><div class="a" style="left:64.6px;top:68px;width:1px;height:19px;background:#8a3028;"></div><div class="a" style="left:65.6px;top:68px;width:1.6px;height:19px;background:#d9b24a;"></div><div class="a" style="left:67.5px;top:75px;width:1.6px;height:12px;background:#d8603a;"></div><div class="a" style="left:69.9px;top:69px;width:1.6px;height:18px;background:#4f9a8a;"></div><div class="a" style="left:72.3px;top:70px;width:1.6px;height:17px;background:#e6e0d4;"></div><div class="a" style="left:73.9px;top:68px;width:1.2px;height:19px;background:#2b2626;"></div><div class="a" style="left:75.6px;top:75px;width:1px;height:12px;background:#e6e0d4;"></div><div class="a" style="left:77.1px;top:68px;width:1px;height:19px;background:#8a3028;"></div><div class="a" style="left:0px;top:0px;width:86px;height:87px;background:rgba(35,26,22,.22);"></div><div class="a" style="left:86px;top:0px;width:67px;height:64px;background:linear-gradient(#8a4b38 0%,#7c4333 30%,#5a342a 65%,#41302a 100%);"></div><div class="a" style="left:86px;top:0px;width:67px;height:64px;background:repeating-linear-gradient(0deg,rgba(40,20,15,.4) 0,rgba(40,20,15,.4) .7px,transparent .7px,transparent 4.500px);"></div><div class="a" style="left:86px;top:0px;width:67px;height:64px;background:repeating-linear-gradient(90deg,rgba(40,20,15,.16) 0,rgba(40,20,15,.16) .7px,transparent .7px,transparent 11px);"></div><div class="a" style="left:84px;top:0px;width:10px;height:87px;background:linear-gradient(90deg,#37302e,rgba(55,48,46,0));"></div><div class="a" style="left:86px;top:62.5px;width:67px;height:2.2px;background:#5c3128;"></div><div class="a" style="left:86px;top:64.7px;width:67px;height:23px;background:#2a2423;"></div><div class="a" style="left:90px;top:8px;width:30px;height:38px;background:#2a2a22;filter:blur(3.500px);opacity:.85"></div><div class="a" style="left:96px;top:14px;width:4px;height:3px;background:#6a2a24;filter:blur(1.200px);opacity:.6"></div><div class="a" style="left:106px;top:22px;width:4px;height:3px;background:#3a5a36;filter:blur(1.200px);opacity:.6"></div><div class="a" style="left:100px;top:30px;width:4px;height:3px;background:#6a2a24;filter:blur(1.200px);opacity:.6"></div><div class="a" style="left:110px;top:10px;width:4px;height:3px;background:#3f6a3c;filter:blur(1.200px);opacity:.6"></div><div class="a" style="left:118.4px;top:17.3px;width:40px;height:39.8px;background:#1c1a1c;"></div><div class="a" style="left:120.4px;top:19.6px;width:34px;height:35.4px;background:linear-gradient(135deg,#d9dcf3,#c9cdec 60%,#b9c0e2);"></div><div class="a" style="left:131.5px;top:31.5px;width:8.5px;height:13.5px;background:#b9cbb0;border:.8px solid #5f8a5f;filter:blur(.5px)"></div><div class="a" style="left:143px;top:28px;width:11px;height:20px;background:#a3a9cc;filter:blur(1.200px);opacity:.8"></div><div class="a" style="left:144px;top:36px;width:9px;height:8px;background:#4a4a5a;filter:blur(1.200px);opacity:.7"></div><div class="a" style="left:120.4px;top:50.6px;width:34px;height:4.4px;background:#3a3f58;opacity:.85;filter:blur(.5px)"></div><div class="a" style="left:124px;top:59.8px;width:29px;height:2.2px;background:#d8d8da;filter:blur(.5px)"></div><div class="a" style="left:100px;top:49.7px;width:8px;height:11.5px;background:#ddd8d0;filter:blur(.6px)"></div><div class="a" style="left:118px;top:77px;width:35px;height:10px;background:repeating-linear-gradient(60deg,#8a3a36 0,#8a3a36 1px,#d8c8c0 1px,#d8c8c0 1.600px,#3a2a28 1.600px,#3a2a28 3px);opacity:.6;filter:blur(.5px)"></div><div class="a" style="left:54px;top:73px;width:72px;height:20px;background:#1c2226;border-radius:36px 40px 0 0;filter:blur(.9px)"></div><div class="a" style="left:84px;top:72px;width:10px;height:14px;background:#b8b4ae;filter:blur(.9px);clip-path:polygon(0 0,100% 0,62% 100%,38% 100%)"></div><div class="a" style="left:77.5px;top:38px;width:23.5px;height:38px;background:radial-gradient(ellipse at 50% 45%,#c99b84 0%,#bb8c75 50%,#a67862 90%);border-radius:46% 46% 50% 50%;filter:blur(.8px)"></div><div class="a" style="left:76px;top:33.4px;width:25.5px;height:10.5px;background:#1b1718;border-radius:50% 50% 24% 24%;filter:blur(.8px)"></div><div class="a" style="left:76px;top:41px;width:2.4px;height:7px;background:#1b1718;filter:blur(.9px)"></div><div class="a" style="left:99.2px;top:41px;width:2.4px;height:7px;background:#1b1718;filter:blur(.9px)"></div><div class="a" style="left:79px;top:48.5px;width:9.5px;height:5.5px;background:rgba(220,220,215,.12);border:.5px solid rgba(120,100,90,.45);border-radius:2.600px;filter:blur(.4px)"></div><div class="a" style="left:90.5px;top:48.5px;width:9.5px;height:5.5px;background:rgba(220,220,215,.12);border:.5px solid rgba(120,100,90,.45);border-radius:2.600px;filter:blur(.4px)"></div><div class="a" style="left:81.5px;top:50.6px;width:4px;height:1.4px;background:#3a2a26;filter:blur(.7px);opacity:.5"></div><div class="a" style="left:93px;top:50.6px;width:4px;height:1.4px;background:#3a2a26;filter:blur(.7px);opacity:.5"></div><div class="a" style="left:85px;top:64px;width:8px;height:1.8px;background:#8f544c;filter:blur(.7px)"></div><div class="a" style="left:18px;top:67.6px;width:66px;height:18.8px;background:rgba(24,22,24,.66);"></div><div class="a" style="left:0px;top:67.4px;width:18px;height:19px;background:#1d6cf5;"></div><svg width="15" height="14" viewBox="0 0 15 14" style="left:1.6px;top:69.2px;"><circle cx="7.400" cy="4" r="3.100" fill="#fff"/><path d="M.8 13.600c0-4 2.600-5.600 4-6l2.600 1.400L10 7.600c1.400.4 4 2 4 6z" fill="#fff"/></svg><svg width="12" height="14" viewBox="0 0 12 14" style="left:24.4px;top:70.4px;"><defs><linearGradient id="mg24470" x1="0" y1="0" x2="0" y2="1"><stop offset="0" stop-color="#fff"/><stop offset=".35" stop-color="#fff"/><stop offset=".36" stop-color="#12e265"/><stop offset="1" stop-color="#12e265"/></linearGradient></defs><rect x="3.400" y=".2" width="5.200" height="8.600" rx="2.600" fill="url(#mg24470)"/><path d="M1.300 6.200c0 3 2 4.700 4.700 4.700s4.700-1.700 4.700-4.700M6 10.900v2.700" fill="none" stroke="#fff" stroke-width="1.200"/></svg><span class="t" style="left:42.300px;top:72px;font-size:11.600px;font-weight:bold;color:#fff;letter-spacing:.3px">孙晋海</span></div>
<div class="tile" style="left:8px;top:206px;width:155px;height:89.300px;background:#1fd870;border-radius:3px 0 0 3px"><div class="a" style="left:2px;top:2px;width:153px;height:85.300px;overflow:hidden;border-radius:1.500px 0 0 1.500px"><div class="a" style="left:0px;top:0px;width:153px;height:87px;background:linear-gradient(90deg,#dfe2e6 0%,#e9ebee 30%,#eef0f2 70%,#f4f5f6 100%);"></div><div class="a" style="left:0px;top:0px;width:14px;height:34px;background:#b58a58;clip-path:polygon(0 8%,70% 22%,70% 62%,0 100%)"></div><div class="a" style="left:1px;top:6px;width:8px;height:22px;background:#5a4a3e;clip-path:polygon(0 10%,100% 25%,100% 60%,0 90%)"></div><div class="a" style="left:14px;top:1px;width:26px;height:1.4px;background:#b9bcc0;transform:rotate(14deg);transform-origin:0 0"></div><div class="a" style="left:36px;top:6px;width:1.6px;height:60px;background:#c3c6ca;transform:rotate(8deg);transform-origin:0 0"></div><div class="a" style="left:40px;top:10px;width:1.4px;height:50px;background:#d0d3d6;transform:rotate(8deg);transform-origin:0 0"></div><div class="a" style="left:40px;top:17px;width:85px;height:1px;background:#d4d6d9;"></div><div class="a" style="left:119px;top:0px;width:34px;height:87px;background:linear-gradient(90deg,#f1f2f3,#f8f8f9);"></div><div class="a" style="left:119px;top:0px;width:1px;height:87px;background:#dcdee0;transform:rotate(-6deg);transform-origin:0 0"></div><div class="a" style="left:137px;top:6px;width:14px;height:14px;background:#e8e4d8;border:1.500px solid #c9b27a;border-radius:50%"></div><div class="a" style="left:141px;top:19px;width:9px;height:6px;background:#cdb888;filter:blur(.6px)"></div><div class="a" style="left:16px;top:41px;width:116px;height:60px;background:#84888a;border-radius:36% 40% 0 0;filter:blur(1.200px)"></div><div class="a" style="left:30px;top:45px;width:80px;height:50px;background:#8e9293;border-radius:30% 30% 0 0;filter:blur(3px)"></div><div class="a" style="left:52px;top:40px;width:36px;height:14px;background:#7d8182;filter:blur(2px)"></div><div class="a" style="left:60px;top:46px;width:18px;height:26px;background:#b4856f;filter:blur(1.500px);clip-path:polygon(0 0,100% 0,60% 100%,40% 100%)"></div><div class="a" style="left:50.5px;top:6px;width:36px;height:48px;background:radial-gradient(ellipse at 45% 45%,#d2a28c 0%,#c4927c 50%,#aa7c68 92%);border-radius:45% 45% 50% 50%;filter:blur(.9px)"></div><div class="a" style="left:48.5px;top:-3px;width:40px;height:18px;background:#1d1a1c;border-radius:46% 46% 36% 36%;filter:blur(.9px)"></div><div class="a" style="left:48.5px;top:8px;width:4.5px;height:15px;background:#1d1a1c;filter:blur(1.100px);border-radius:0 0 50% 50%"></div><div class="a" style="left:84.5px;top:8px;width:4.5px;height:17px;background:#1d1a1c;filter:blur(1.100px);border-radius:0 0 50% 50%"></div><div class="a" style="left:60px;top:40px;width:11px;height:3.4px;background:#7a3f3a;filter:blur(.9px)"></div><div class="a" style="left:55px;top:25.5px;width:8px;height:1.8px;background:#3f2c28;filter:blur(.8px);opacity:.6"></div><div class="a" style="left:69px;top:25.5px;width:8px;height:1.8px;background:#3f2c28;filter:blur(.8px);opacity:.6"></div><div class="a" style="left:62px;top:30px;width:6px;height:7px;background:#a8745f;filter:blur(1.400px);opacity:.7"></div><div class="a" style="left:86px;top:30px;width:2px;height:3px;background:#f0f0f0;filter:blur(.5px)"></div><div class="a" style="left:66px;top:77px;width:14px;height:10px;background:#3a3c40;border-radius:2px;filter:blur(.6px)"></div><div class="a" style="left:68px;top:79px;width:10px;height:6px;background:#8f9aa6;filter:blur(.6px)"></div><div class="a" style="left:80px;top:74px;width:40px;height:13px;background:#c9a08c;filter:blur(2px);border-radius:8px"></div><div class="a" style="left:0px;top:67.2px;width:64px;height:19px;background:rgba(24,22,24,.70);"></div><svg width="12" height="14" viewBox="0 0 12 14" style="left:4px;top:70.2px;"><defs><linearGradient id="mg4070" x1="0" y1="0" x2="0" y2="1"><stop offset="0" stop-color="#fff"/><stop offset=".35" stop-color="#fff"/><stop offset=".36" stop-color="#12e265"/><stop offset="1" stop-color="#12e265"/></linearGradient></defs><rect x="3.400" y=".2" width="5.200" height="8.600" rx="2.600" fill="url(#mg4070)"/><path d="M1.300 6.200c0 3 2 4.700 4.700 4.700s4.700-1.700 4.700-4.700M6 10.900v2.700" fill="none" stroke="#fff" stroke-width="1.200"/></svg><span class="t" style="left:22px;top:72px;font-size:11.600px;font-weight:bold;color:#fff;letter-spacing:.5px">张立国</span></div></div>
<div class="tile" style="top:302.600px;height:86.600px;background:#2c2e31"><div class="a" style="left:58px;top:16.4px;width:40px;height:40px;background:#9fb0b4;border-radius:50%;overflow:hidden"></div><div class="a" style="left:58px;top:16.400px;width:40px;height:40px;border-radius:50%;overflow:hidden"><div class="a" style="left:0px;top:0px;width:40px;height:40px;background:linear-gradient(150deg,#66787e 0%,#8799a0 28%,#cfdadd 50%,#eef3f3 70%,#aebdc0 100%);"></div><div class="a" style="left:12px;top:-6px;width:34px;height:22px;background:#5f5d55;transform:rotate(34deg);filter:blur(1.500px)"></div><div class="a" style="left:20px;top:0px;width:20px;height:9px;background:#8d8979;transform:rotate(34deg);filter:blur(1.500px)"></div><div class="a" style="left:-2px;top:2px;width:14px;height:18px;background:#566a70;filter:blur(3px)"></div><div class="a" style="left:4px;top:23px;width:30px;height:13px;background:#f6f9f9;filter:blur(2.500px);transform:rotate(-14deg)"></div><div class="a" style="left:2px;top:12px;width:14px;height:10px;background:#c3d1d4;filter:blur(2.500px)"></div><div class="a" style="left:24px;top:28px;width:16px;height:12px;background:#7f9096;filter:blur(3px)"></div></div><div class="a" style="left:0px;top:67.6px;width:153px;height:19px;background:#18191b;"></div><svg width="12" height="14" viewBox="0 0 12 14" style="left:4.4px;top:70.4px;"><rect x="3.600" y=".5" width="4.800" height="8" rx="2.400" fill="#fff"/><path d="M1.400 6.200c0 3 2 4.600 4.600 4.600s4.600-1.600 4.600-4.600M6 10.800v2.600" fill="none" stroke="#fff" stroke-width="1.200"/><path d="M.4 12.600L11.600 1" stroke="#f0323c" stroke-width="1.300"/></svg><span class="t" style="left:22.500px;top:71.800px;font-size:11.600px;font-weight:bold;color:#fff;letter-spacing:.64px">白瑞广山东大学体育...</span></div>
<div class="tile" style="top:398.200px;height:85.600px"><div class="a" style="left:0px;top:0px;width:153px;height:87px;background:linear-gradient(#e1e6e9 0%,#d6e0e3 50%,#c3d5d9 100%);"></div><div class="a" style="left:0px;top:0px;width:110px;height:40px;background:#e3e7ea;filter:blur(4px)"></div><div class="a" style="left:109px;top:0px;width:13.5px;height:87px;background:linear-gradient(90deg,#c9cdd1,#a7adb3 45%,#9ba1a7 70%,#b4b9be);"></div><div class="a" style="left:122px;top:0px;width:31px;height:87px;background:#f3f5f6;"></div><div class="a" style="left:148px;top:58px;width:5px;height:14px;background:#c8ccd0;"></div><div class="a" style="left:2.0px;top:19.0px;width:8.6px;height:3.2px;background:#e6ecf4;"></div><div class="a" style="left:2.6px;top:19.4px;width:3.4px;height:2.4px;background:#3f6fc0;opacity:.6;filter:blur(.3px)"></div><div class="a" style="left:6.4px;top:19.4px;width:3.4px;height:2.4px;background:#4f88d0;opacity:.5;filter:blur(.3px)"></div><div class="a" style="left:12.5px;top:19.0px;width:8.6px;height:3.2px;background:#e6ecf4;"></div><div class="a" style="left:13.1px;top:19.4px;width:3.4px;height:2.4px;background:#c8584a;opacity:.6;filter:blur(.3px)"></div><div class="a" style="left:16.9px;top:19.4px;width:3.4px;height:2.4px;background:#3f6fc0;opacity:.5;filter:blur(.3px)"></div><div class="a" style="left:23.0px;top:19.0px;width:8.6px;height:3.2px;background:#e6ecf4;"></div><div class="a" style="left:23.6px;top:19.4px;width:3.4px;height:2.4px;background:#4f88d0;opacity:.6;filter:blur(.3px)"></div><div class="a" style="left:27.4px;top:19.4px;width:3.4px;height:2.4px;background:#d06a5a;opacity:.5;filter:blur(.3px)"></div><div class="a" style="left:33.5px;top:19.0px;width:8.6px;height:3.2px;background:#e6ecf4;"></div><div class="a" style="left:34.1px;top:19.4px;width:3.4px;height:2.4px;background:#3f6fc0;opacity:.6;filter:blur(.3px)"></div><div class="a" style="left:37.9px;top:19.4px;width:3.4px;height:2.4px;background:#4f88d0;opacity:.5;filter:blur(.3px)"></div><div class="a" style="left:44.0px;top:19.0px;width:8.6px;height:3.2px;background:#e6ecf4;"></div><div class="a" style="left:44.6px;top:19.4px;width:3.4px;height:2.4px;background:#c8584a;opacity:.6;filter:blur(.3px)"></div><div class="a" style="left:48.4px;top:19.4px;width:3.4px;height:2.4px;background:#3f6fc0;opacity:.5;filter:blur(.3px)"></div><div class="a" style="left:2.0px;top:23.2px;width:8.6px;height:3.2px;background:#e6ecf4;"></div><div class="a" style="left:2.6px;top:23.599999999999998px;width:3.4px;height:2.4px;background:#c8584a;opacity:.6;filter:blur(.3px)"></div><div class="a" style="left:6.4px;top:23.599999999999998px;width:3.4px;height:2.4px;background:#d06a5a;opacity:.5;filter:blur(.3px)"></div><div class="a" style="left:12.5px;top:23.2px;width:8.6px;height:3.2px;background:#e6ecf4;"></div><div class="a" style="left:13.1px;top:23.599999999999998px;width:3.4px;height:2.4px;background:#4f88d0;opacity:.6;filter:blur(.3px)"></div><div class="a" style="left:16.9px;top:23.599999999999998px;width:3.4px;height:2.4px;background:#4f88d0;opacity:.5;filter:blur(.3px)"></div><div class="a" style="left:23.0px;top:23.2px;width:8.6px;height:3.2px;background:#e6ecf4;"></div><div class="a" style="left:23.6px;top:23.599999999999998px;width:3.4px;height:2.4px;background:#3f6fc0;opacity:.6;filter:blur(.3px)"></div><div class="a" style="left:27.4px;top:23.599999999999998px;width:3.4px;height:2.4px;background:#3f6fc0;opacity:.5;filter:blur(.3px)"></div><div class="a" style="left:33.5px;top:23.2px;width:8.6px;height:3.2px;background:#e6ecf4;"></div><div class="a" style="left:34.1px;top:23.599999999999998px;width:3.4px;height:2.4px;background:#c8584a;opacity:.6;filter:blur(.3px)"></div><div class="a" style="left:37.9px;top:23.599999999999998px;width:3.4px;height:2.4px;background:#d06a5a;opacity:.5;filter:blur(.3px)"></div><div class="a" style="left:44.0px;top:23.2px;width:8.6px;height:3.2px;background:#e6ecf4;"></div><div class="a" style="left:44.6px;top:23.599999999999998px;width:3.4px;height:2.4px;background:#4f88d0;opacity:.6;filter:blur(.3px)"></div><div class="a" style="left:48.4px;top:23.599999999999998px;width:3.4px;height:2.4px;background:#4f88d0;opacity:.5;filter:blur(.3px)"></div><div class="a" style="left:2.0px;top:27.4px;width:8.6px;height:3.2px;background:#e6ecf4;"></div><div class="a" style="left:2.6px;top:27.799999999999997px;width:3.4px;height:2.4px;background:#4f88d0;opacity:.6;filter:blur(.3px)"></div><div class="a" style="left:6.4px;top:27.799999999999997px;width:3.4px;height:2.4px;background:#3f6fc0;opacity:.5;filter:blur(.3px)"></div><div class="a" style="left:12.5px;top:27.4px;width:8.6px;height:3.2px;background:#e6ecf4;"></div><div class="a" style="left:13.1px;top:27.799999999999997px;width:3.4px;height:2.4px;background:#3f6fc0;opacity:.6;filter:blur(.3px)"></div><div class="a" style="left:16.9px;top:27.799999999999997px;width:3.4px;height:2.4px;background:#d06a5a;opacity:.5;filter:blur(.3px)"></div><div class="a" style="left:23.0px;top:27.4px;width:8.6px;height:3.2px;background:#e6ecf4;"></div><div class="a" style="left:23.6px;top:27.799999999999997px;width:3.4px;height:2.4px;background:#c8584a;opacity:.6;filter:blur(.3px)"></div><div class="a" style="left:27.4px;top:27.799999999999997px;width:3.4px;height:2.4px;background:#4f88d0;opacity:.5;filter:blur(.3px)"></div><div class="a" style="left:33.5px;top:27.4px;width:8.6px;height:3.2px;background:#e6ecf4;"></div><div class="a" style="left:34.1px;top:27.799999999999997px;width:3.4px;height:2.4px;background:#4f88d0;opacity:.6;filter:blur(.3px)"></div><div class="a" style="left:37.9px;top:27.799999999999997px;width:3.4px;height:2.4px;background:#3f6fc0;opacity:.5;filter:blur(.3px)"></div><div class="a" style="left:2.0px;top:31.6px;width:8.6px;height:3.2px;background:#e6ecf4;"></div><div class="a" style="left:2.6px;top:32.0px;width:3.4px;height:2.4px;background:#3f6fc0;opacity:.6;filter:blur(.3px)"></div><div class="a" style="left:6.4px;top:32.0px;width:3.4px;height:2.4px;background:#4f88d0;opacity:.5;filter:blur(.3px)"></div><div class="a" style="left:12.5px;top:31.6px;width:8.6px;height:3.2px;background:#e6ecf4;"></div><div class="a" style="left:13.1px;top:32.0px;width:3.4px;height:2.4px;background:#c8584a;opacity:.6;filter:blur(.3px)"></div><div class="a" style="left:16.9px;top:32.0px;width:3.4px;height:2.4px;background:#3f6fc0;opacity:.5;filter:blur(.3px)"></div><div class="a" style="left:23.0px;top:31.6px;width:8.6px;height:3.2px;background:#e6ecf4;"></div><div class="a" style="left:23.6px;top:32.0px;width:3.4px;height:2.4px;background:#4f88d0;opacity:.6;filter:blur(.3px)"></div><div class="a" style="left:27.4px;top:32.0px;width:3.4px;height:2.4px;background:#d06a5a;opacity:.5;filter:blur(.3px)"></div><div class="a" style="left:33.5px;top:31.6px;width:8.6px;height:3.2px;background:#e6ecf4;"></div><div class="a" style="left:34.1px;top:32.0px;width:3.4px;height:2.4px;background:#3f6fc0;opacity:.6;filter:blur(.3px)"></div><div class="a" style="left:37.9px;top:32.0px;width:3.4px;height:2.4px;background:#4f88d0;opacity:.5;filter:blur(.3px)"></div><svg width="153" height="87" viewBox="0 0 153 87" style="left:0px;top:0px;"><g filter="url(#fshelf)"><rect x="68" y="20.800" width="11.600" height="39.800" fill="#e6c88e"/><rect x="76.600" y="20.800" width="3" height="39.800" fill="#d2b278"/><path d="M74 33L88 15.600M76 46.700L88 34.600M77 58.500L88 54.500" stroke="#ecd7a4" stroke-width="2.400" fill="none"/><path d="M58.800 26L72.700 36.300" stroke="#e6cc94" stroke-width="2.200" fill="none"/><path d="M55 42L72.700 53.600" stroke="#dcbc80" stroke-width="3.600" fill="none"/><path d="M57.500 39.800L70 48" stroke="#efdcae" stroke-width="1.600" fill="none"/></g><defs><filter id="fshelf"><feGaussianBlur stdDeviation=".45"/></filter></defs></svg><div class="a" style="left:40px;top:57px;width:2.4px;height:12px;background:#1a1a1c;"></div><div class="a" style="left:38.5px;top:55.5px;width:6px;height:5px;border:1.300px solid #1a1a1c;border-bottom:none;border-radius:3px 3px 0 0"></div><div class="a" style="left:55px;top:58px;width:12px;height:9px;background:#7a4a4a;transform:rotate(28deg);filter:blur(.8px)"></div><div class="a" style="left:57px;top:57px;width:8px;height:3px;background:#4f8a5a;transform:rotate(28deg);filter:blur(.6px)"></div><div class="a" style="left:62px;top:62px;width:28px;height:26px;background:#25272a;border-radius:6px 6px 0 0;filter:blur(.8px)"></div><div class="a" style="left:58px;top:66px;width:96px;height:24px;background:#202226;border-radius:48px 40px 0 0;filter:blur(1px)"></div><div class="a" style="left:90px;top:72px;width:4px;height:15px;background:#8a9096;filter:blur(1.200px);opacity:.55"></div><div class="a" style="left:128px;top:74px;width:4px;height:13px;background:#6a7078;filter:blur(1.200px);opacity:.5"></div><div class="a" style="left:94px;top:27px;width:39.5px;height:53px;background:radial-gradient(ellipse at 45% 48%,#dcb8a8 0%,#d0a896 50%,#b48a78 92%);border-radius:44% 44% 50% 50%;filter:blur(.9px)"></div><div class="a" style="left:90.5px;top:17.6px;width:45px;height:18.5px;background:#221f22;border-radius:50% 50% 30% 30%;filter:blur(.9px)"></div><div class="a" style="left:90.5px;top:28px;width:4.5px;height:20px;background:#221f22;filter:blur(1.200px);border-radius:0 0 50% 50%"></div><div class="a" style="left:131px;top:28px;width:4.5px;height:20px;background:#221f22;filter:blur(1.200px);border-radius:0 0 50% 50%"></div><div class="a" style="left:97px;top:35px;width:34px;height:8px;background:#d2aa98;filter:blur(1.800px)"></div><div class="a" style="left:97px;top:49.5px;width:15px;height:7.5px;background:rgba(225,230,232,.3);border:.7px solid rgba(95,95,102,.75);border-radius:3px;filter:blur(.35px)"></div><div class="a" style="left:115.5px;top:49.5px;width:15px;height:7.5px;background:rgba(225,230,232,.3);border:.7px solid rgba(95,95,102,.75);border-radius:3px;filter:blur(.35px)"></div><div class="a" style="left:101px;top:52.5px;width:6px;height:1.8px;background:#3a2e2e;filter:blur(.8px);opacity:.55"></div><div class="a" style="left:120px;top:52.5px;width:6px;height:1.8px;background:#3a2e2e;filter:blur(.8px);opacity:.55"></div><div class="a" style="left:110px;top:56px;width:6px;height:10px;background:#b88a78;filter:blur(1.500px);opacity:.7"></div><div class="a" style="left:108px;top:71px;width:10px;height:2.2px;background:#a05a56;filter:blur(.8px)"></div><div class="a" style="left:0px;top:67px;width:61.5px;height:19px;background:rgba(48,50,52,.8);"></div><svg width="12" height="14" viewBox="0 0 12 14" style="left:4.4px;top:70.2px;"><rect x="3.600" y=".5" width="4.800" height="8" rx="2.400" fill="#fff"/><path d="M1.400 6.200c0 3 2 4.600 4.600 4.600s4.600-1.600 4.600-4.600M6 10.800v2.600" fill="none" stroke="#fff" stroke-width="1.200"/><path d="M.4 12.600L11.600 1" stroke="#f0323c" stroke-width="1.300"/></svg><span class="t" style="left:22.500px;top:72.200px;font-size:11.600px;font-weight:bold;color:#fff;letter-spacing:.4px">范泽斌</span></div>
<div class="tile" style="top:493.200px;height:10px;background:#2c2e31"><div class="a" style="left:53.5px;top:0px;width:48.5px;height:10px;background:linear-gradient(#e8eaec,#cfd2d5);"></div><div class="a" style="left:92px;top:0px;width:7px;height:2px;background:#5a5d60;"></div></div>
</div>
<div class="a" style="left:759.8px;top:250px;width:16.4px;height:39.6px;background:#5e6164;border-radius:4px 0 0 4px"></div>
<svg width="6.4" height="14.4" viewBox="0 0 6.4 14.4" style="left:764.6px;top:262.4px;"><path d="M.6.600l5 6.600-5 6.600" fill="none" stroke="#c9cacc" stroke-width="1.300"/></svg>
<svg width="6.4" height="6.4" viewBox="0 0 6.4 6.4" style="left:761.6px;top:252px;"><circle cx="3.200" cy="3.200" r="2.800" fill="none" stroke="#2e3033" stroke-width=".8"/><path d="M3.200.600v5M1.200 1.600l4 3.400" stroke="#2e3033" stroke-width=".6"/></svg>
</body>
</html>
